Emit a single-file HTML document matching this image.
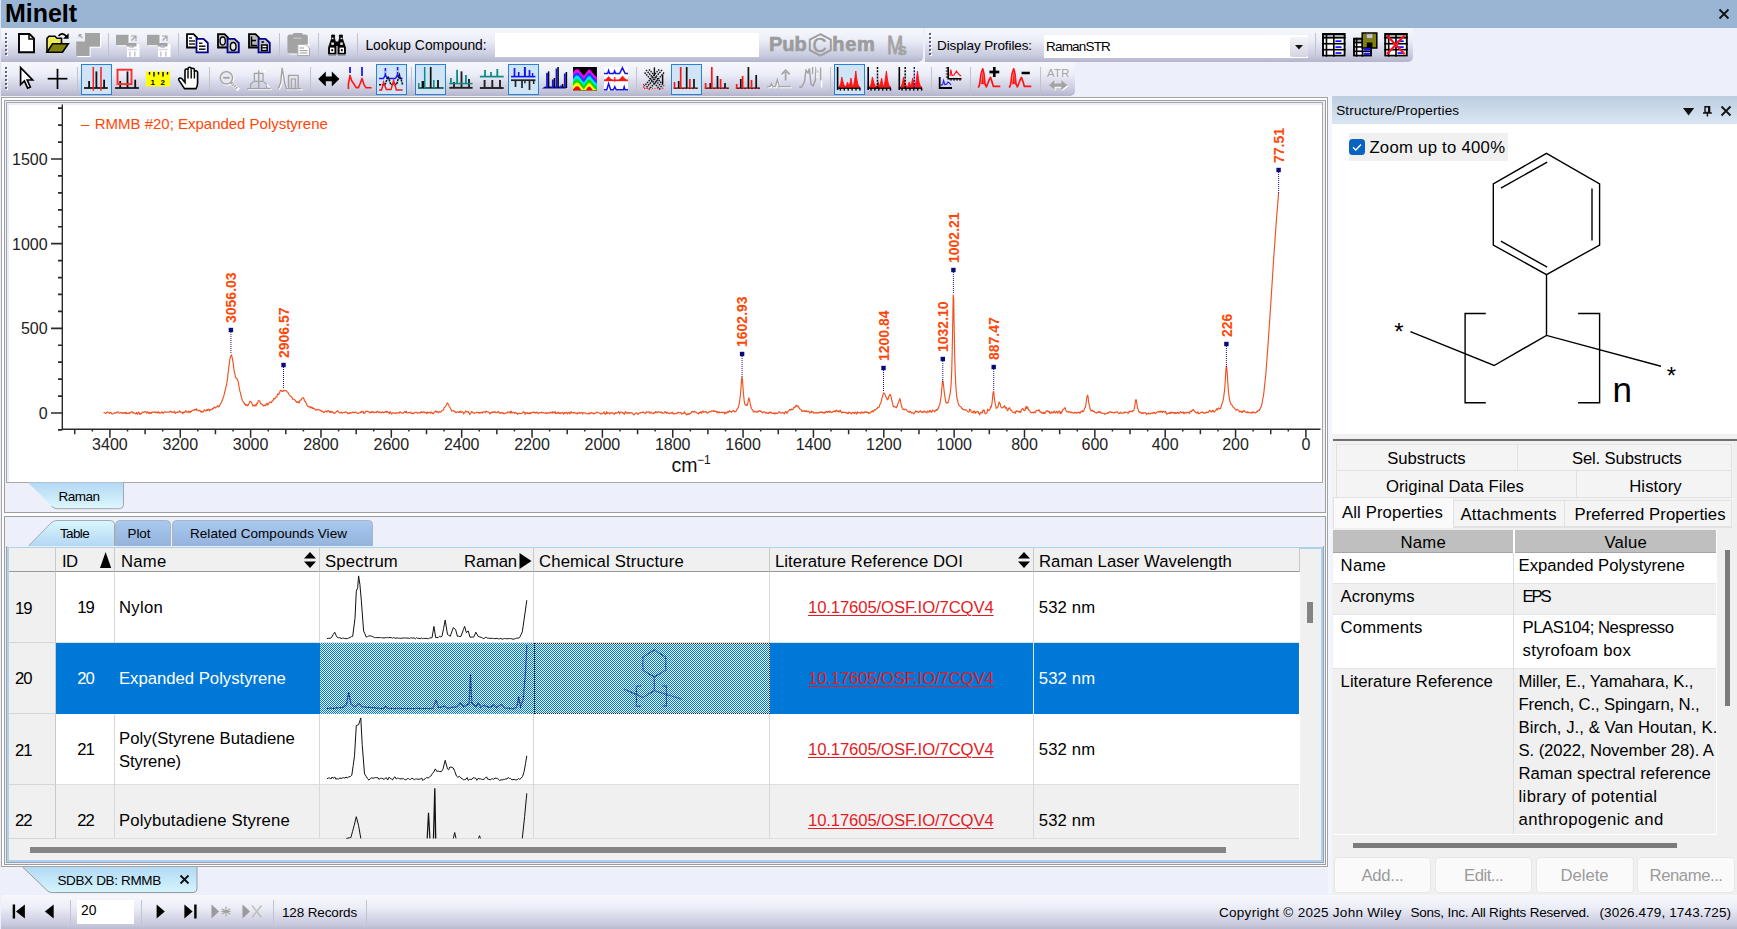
<!DOCTYPE html>
<html><head><meta charset="utf-8"><title>MineIt</title><style>
html,body{margin:0;padding:0;}
body{width:1737px;height:929px;overflow:hidden;background:#edf0fb;font-family:"Liberation Sans",sans-serif;color:#000;position:relative;}
.t{position:absolute;white-space:pre;line-height:1;}
svg{position:absolute;overflow:visible;}
.tb{position:absolute;background:linear-gradient(#f7f8fd 0%,#eceef8 35%,#c9cbdf 80%,#b4b5cc 100%);}
</style></head><body>
<div style="position:absolute;left:0px;top:0px;width:1737px;height:28px;background:#9ab4d4;"></div>
<div style="position:absolute;left:0px;top:0px;width:1px;height:97px;background:#dfe6f3;"></div>
<span class="t" style="left:5.00px;top:1px;font-size:25px;letter-spacing:-0.036px;font-weight:bold;">MineIt</span>
<svg style="left:1718px;top:8px" width="12" height="12"><path d="M1.5 1.5 L10.5 10.5 M10.5 1.5 L1.5 10.5" stroke="#111" stroke-width="1.8" fill="none"/></svg>
<div class="tb" style="position:absolute;left:1px;top:28px;width:921.5px;height:34px;border-radius:0 0 5px 0;"></div>
<div style="position:absolute;left:6px;top:34px;width:2px;height:2px;background:#fff;"></div>
<div style="position:absolute;left:5px;top:33px;width:2px;height:2px;background:#5f6179;"></div>
<div style="position:absolute;left:6px;top:38px;width:2px;height:2px;background:#fff;"></div>
<div style="position:absolute;left:5px;top:37px;width:2px;height:2px;background:#5f6179;"></div>
<div style="position:absolute;left:6px;top:42px;width:2px;height:2px;background:#fff;"></div>
<div style="position:absolute;left:5px;top:41px;width:2px;height:2px;background:#5f6179;"></div>
<div style="position:absolute;left:6px;top:46px;width:2px;height:2px;background:#fff;"></div>
<div style="position:absolute;left:5px;top:45px;width:2px;height:2px;background:#5f6179;"></div>
<div style="position:absolute;left:6px;top:50px;width:2px;height:2px;background:#fff;"></div>
<div style="position:absolute;left:5px;top:49px;width:2px;height:2px;background:#5f6179;"></div>
<div style="position:absolute;left:6px;top:54px;width:2px;height:2px;background:#fff;"></div>
<div style="position:absolute;left:5px;top:53px;width:2px;height:2px;background:#5f6179;"></div>
<div class="tb" style="position:absolute;left:925px;top:28px;width:488px;height:34px;border-radius:0 0 5px 0;"></div>
<div style="position:absolute;left:930px;top:34px;width:2px;height:2px;background:#fff;"></div>
<div style="position:absolute;left:929px;top:33px;width:2px;height:2px;background:#5f6179;"></div>
<div style="position:absolute;left:930px;top:38px;width:2px;height:2px;background:#fff;"></div>
<div style="position:absolute;left:929px;top:37px;width:2px;height:2px;background:#5f6179;"></div>
<div style="position:absolute;left:930px;top:42px;width:2px;height:2px;background:#fff;"></div>
<div style="position:absolute;left:929px;top:41px;width:2px;height:2px;background:#5f6179;"></div>
<div style="position:absolute;left:930px;top:46px;width:2px;height:2px;background:#fff;"></div>
<div style="position:absolute;left:929px;top:45px;width:2px;height:2px;background:#5f6179;"></div>
<div style="position:absolute;left:930px;top:50px;width:2px;height:2px;background:#fff;"></div>
<div style="position:absolute;left:929px;top:49px;width:2px;height:2px;background:#5f6179;"></div>
<div style="position:absolute;left:930px;top:54px;width:2px;height:2px;background:#fff;"></div>
<div style="position:absolute;left:929px;top:53px;width:2px;height:2px;background:#5f6179;"></div>
<div class="tb" style="position:absolute;left:1px;top:62px;width:1074px;height:34px;border-radius:0 0 5px 0;"></div>
<div style="position:absolute;left:6px;top:68px;width:2px;height:2px;background:#fff;"></div>
<div style="position:absolute;left:5px;top:67px;width:2px;height:2px;background:#5f6179;"></div>
<div style="position:absolute;left:6px;top:72px;width:2px;height:2px;background:#fff;"></div>
<div style="position:absolute;left:5px;top:71px;width:2px;height:2px;background:#5f6179;"></div>
<div style="position:absolute;left:6px;top:76px;width:2px;height:2px;background:#fff;"></div>
<div style="position:absolute;left:5px;top:75px;width:2px;height:2px;background:#5f6179;"></div>
<div style="position:absolute;left:6px;top:80px;width:2px;height:2px;background:#fff;"></div>
<div style="position:absolute;left:5px;top:79px;width:2px;height:2px;background:#5f6179;"></div>
<div style="position:absolute;left:6px;top:84px;width:2px;height:2px;background:#fff;"></div>
<div style="position:absolute;left:5px;top:83px;width:2px;height:2px;background:#5f6179;"></div>
<div style="position:absolute;left:6px;top:88px;width:2px;height:2px;background:#fff;"></div>
<div style="position:absolute;left:5px;top:87px;width:2px;height:2px;background:#5f6179;"></div>
<div style="position:absolute;left:108px;top:33px;width:1.4px;height:27px;background:#c2c2c8;"></div>
<div style="position:absolute;left:178px;top:33px;width:1.4px;height:27px;background:#c2c2c8;"></div>
<div style="position:absolute;left:279px;top:33px;width:1.4px;height:27px;background:#c2c2c8;"></div>
<div style="position:absolute;left:318px;top:33px;width:1.4px;height:27px;background:#c2c2c8;"></div>
<div style="position:absolute;left:356.5px;top:33px;width:1.4px;height:27px;background:#c2c2c8;"></div>
<div style="position:absolute;left:1315px;top:33px;width:1.4px;height:27px;background:#c2c2c8;"></div>
<div style="position:absolute;left:77px;top:67px;width:1.4px;height:27px;background:#c2c2c8;"></div>
<div style="position:absolute;left:209px;top:67px;width:1.4px;height:27px;background:#c2c2c8;"></div>
<div style="position:absolute;left:310px;top:67px;width:1.4px;height:27px;background:#c2c2c8;"></div>
<div style="position:absolute;left:411px;top:67px;width:1.4px;height:27px;background:#c2c2c8;"></div>
<div style="position:absolute;left:636px;top:67px;width:1.4px;height:27px;background:#c2c2c8;"></div>
<div style="position:absolute;left:830px;top:67px;width:1.4px;height:27px;background:#c2c2c8;"></div>
<div style="position:absolute;left:931px;top:67px;width:1.4px;height:27px;background:#c2c2c8;"></div>
<div style="position:absolute;left:970px;top:67px;width:1.4px;height:27px;background:#c2c2c8;"></div>
<div style="position:absolute;left:1040px;top:67px;width:1.4px;height:27px;background:#c2c2c8;"></div>
<span class="t" style="left:365.40px;top:39px;font-size:13.9px;letter-spacing:0.004px;">Lookup Compound:</span>
<div style="position:absolute;left:495px;top:33px;width:264px;height:24px;background:#fff;"></div>
<span class="t" style="left:937.00px;top:39px;font-size:13.5px;letter-spacing:-0.105px;">Display Profiles:</span>
<div style="position:absolute;left:1043.5px;top:35px;width:264.5px;height:23px;background:#fff;"></div>
<span class="t" style="left:1046.00px;top:40px;font-size:13.5px;letter-spacing:-0.815px;">RamanSTR</span>
<div style="position:absolute;left:1290px;top:37px;width:18px;height:20px;background:linear-gradient(#f4f4f8,#d4d5e2);border-radius:2px;"></div>
<svg style="left:1295px;top:45px" width="8" height="5"><path d="M0 0H8L4 4.5Z" fill="#111"/></svg>
<div style="position:absolute;left:81px;top:64px;width:29px;height:29px;background:#cfe4f7;border:1px solid #2a7fd6;"></div>
<div style="position:absolute;left:376px;top:64px;width:29px;height:29px;background:#cfe4f7;border:1px solid #2a7fd6;"></div>
<div style="position:absolute;left:415px;top:64px;width:29px;height:29px;background:#cfe4f7;border:1px solid #2a7fd6;"></div>
<div style="position:absolute;left:508px;top:64px;width:29px;height:29px;background:#cfe4f7;border:1px solid #2a7fd6;"></div>
<div style="position:absolute;left:671px;top:64px;width:29px;height:29px;background:#cfe4f7;border:1px solid #2a7fd6;"></div>
<div style="position:absolute;left:834px;top:64px;width:29px;height:29px;background:#cfe4f7;border:1px solid #2a7fd6;"></div>
<div style="position:absolute;left:1px;top:895px;width:1736px;height:34px;border-radius:4px 0 0 0;background:linear-gradient(#f7f8fd 0%,#eceef8 35%,#c9cbdf 85%,#b9bacf 100%);"></div>
<span class="t" style="left:282.00px;top:906px;font-size:13.5px;letter-spacing:-0.141px;">128 Records</span>
<span class="t" style="left:1219.00px;top:906px;font-size:13.5px;letter-spacing:0.284px;">Copyright © 2025 John Wiley</span>
<span class="t" style="left:1410.40px;top:906px;font-size:13.5px;letter-spacing:-0.204px;">Sons, Inc. All Rights Reserved.</span>
<span class="t" style="left:1599.50px;top:906px;font-size:13.5px;letter-spacing:0.129px;">(3026.479, 1743.725)</span>
<div style="position:absolute;left:77px;top:900px;width:57px;height:24px;background:#fff;"></div>
<span class="t" style="left:81.00px;top:904px;font-size:13.9px;letter-spacing:-0.081px;">20</span>
<div style="position:absolute;left:70px;top:900px;width:1.3px;height:25px;background:#c3c4d2;"></div>
<div style="position:absolute;left:141px;top:900px;width:1.3px;height:25px;background:#c3c4d2;"></div>
<div style="position:absolute;left:273px;top:900px;width:1.3px;height:25px;background:#c3c4d2;"></div>
<div style="position:absolute;left:366px;top:900px;width:1.3px;height:25px;background:#c3c4d2;"></div>
<svg style="left:11px;top:903px" width="22" height="18"><g fill="#000" stroke="none"><rect x="1.7" y="1.5" width="2.4" height="14"/><path d="M13.9 1.5V15.5L5 8.5Z"/></g></svg>
<svg style="left:41px;top:903px" width="22" height="18"><g fill="#000" stroke="none"><path d="M12.7 1.5V15.5L3.9 8.5Z"/></g></svg>
<svg style="left:151px;top:903px" width="22" height="18"><g fill="#000" stroke="none"><path d="M5.6 1.5V15.5L13.8 8.5Z"/></g></svg>
<svg style="left:181px;top:903px" width="22" height="18"><g fill="#000" stroke="none"><path d="M3.4 1.5V15.5L11.6 8.5Z"/><rect x="13.2" y="1.5" width="2.4" height="14"/></g></svg>
<svg style="left:210px;top:903px" width="22" height="18"><g fill="#9a9a9a" stroke="none"><path d="M1.5 1.5V15.5L9 8.5Z"/><path d="M16 3.5v10M11.8 6l8.4 5M20.2 6l-8.4 5M11.5 8.5h9" stroke="#a0a0a0" stroke-width="1.1" fill="none"/></g></svg>
<svg style="left:241px;top:903px" width="22" height="18"><g fill="#9a9a9a" stroke="none"><path d="M1.5 1.5V15.5L9 8.5Z"/><path d="M11 2.5l9.5 12M20.5 2.5l-9.5 12" stroke="#bdbdbd" stroke-width="1.4" fill="none"/></g></svg>
<svg style="left:0;top:865.5px" width="220" height="32"><defs><linearGradient id="gdb" x1="0" y1="0" x2="0" y2="1"><stop offset="0" stop-color="#b2d9f5"/><stop offset="1" stop-color="#d6f6fd"/></linearGradient></defs><path d="M22.6 1 H197 V23 Q197 26.5 193 26.5 H52 Q49 26.5 46.6 24 Z" fill="url(#gdb)" stroke="none"/><path d="M22.6 1 L46.6 24 Q49 26.5 52 26.5 H193 Q197 26.5 197 23 V1" fill="none" stroke="#9a9a9a" stroke-width="1"/></svg>
<span class="t" style="left:57.40px;top:874px;font-size:13.5px;letter-spacing:-0.347px;">SDBX DB: RMMB</span>
<svg style="left:178.5px;top:873.5px" width="12" height="12"><path d="M1.5 1.5 L9.5 9.5 M9.5 1.5 L1.5 9.5" stroke="#111" stroke-width="1.8" fill="none"/></svg>
<div style="position:absolute;left:1px;top:97px;width:1327px;height:770px;border:1px solid #a3a3a3;background:#fdfdfd;box-sizing:border-box;"></div>
<div style="position:absolute;left:4px;top:100px;width:1322px;height:413px;border:1px solid #9d9d9d;background:#edf0fb;box-sizing:border-box;"></div>
<div style="position:absolute;left:6px;top:102px;width:1317px;height:381px;border:1px solid #a8a8a8;background:#fff;box-sizing:border-box;"></div>
<div style="position:absolute;left:7px;top:103px;width:1315px;height:379px;border:2px solid #e9ecfb;border-right:none;border-bottom:none;box-sizing:border-box;"></div>
<svg style="left:0;top:0" width="1330" height="515" viewBox="0 0 1330 515"><g stroke="#2b2b2b" fill="none"><path d="M62.3 104.5V430 M61.6 429.3H1320.5" stroke-width="1.4"/><path d="M58 429.93H62.3 M51 413.00H62.3 M58 396.07H62.3 M58 379.13H62.3 M58 362.20H62.3 M58 345.26H62.3 M51 328.33H62.3 M58 311.40H62.3 M58 294.46H62.3 M58 277.53H62.3 M58 260.59H62.3 M51 243.66H62.3 M58 226.73H62.3 M58 209.79H62.3 M58 192.86H62.3 M58 175.92H62.3 M51 158.99H62.3 M58 142.06H62.3 M58 125.12H62.3 M58 108.19H62.3 " stroke-width="1.7"/><path d="M1305.90 429.3V437.8 M1288.31 429.3V431.5 M1270.72 429.3V434.3 M1253.14 429.3V431.5 M1235.55 429.3V437.8 M1217.96 429.3V431.5 M1200.37 429.3V434.3 M1182.78 429.3V431.5 M1165.20 429.3V437.8 M1147.61 429.3V431.5 M1130.02 429.3V434.3 M1112.43 429.3V431.5 M1094.84 429.3V437.8 M1077.26 429.3V431.5 M1059.67 429.3V434.3 M1042.08 429.3V431.5 M1024.49 429.3V437.8 M1006.90 429.3V431.5 M989.32 429.3V434.3 M971.73 429.3V431.5 M954.14 429.3V437.8 M936.55 429.3V431.5 M918.96 429.3V434.3 M901.38 429.3V431.5 M883.79 429.3V437.8 M866.20 429.3V431.5 M848.61 429.3V434.3 M831.02 429.3V431.5 M813.44 429.3V437.8 M795.85 429.3V431.5 M778.26 429.3V434.3 M760.67 429.3V431.5 M743.08 429.3V437.8 M725.50 429.3V431.5 M707.91 429.3V434.3 M690.32 429.3V431.5 M672.73 429.3V437.8 M655.14 429.3V431.5 M637.56 429.3V434.3 M619.97 429.3V431.5 M602.38 429.3V437.8 M584.79 429.3V431.5 M567.20 429.3V434.3 M549.62 429.3V431.5 M532.03 429.3V437.8 M514.44 429.3V431.5 M496.85 429.3V434.3 M479.26 429.3V431.5 M461.68 429.3V437.8 M444.09 429.3V431.5 M426.50 429.3V434.3 M408.91 429.3V431.5 M391.32 429.3V437.8 M373.74 429.3V431.5 M356.15 429.3V434.3 M338.56 429.3V431.5 M320.97 429.3V437.8 M303.38 429.3V431.5 M285.80 429.3V434.3 M268.21 429.3V431.5 M250.62 429.3V437.8 M233.03 429.3V431.5 M215.44 429.3V434.3 M197.86 429.3V431.5 M180.27 429.3V437.8 M162.68 429.3V431.5 M145.09 429.3V434.3 M127.50 429.3V431.5 M109.92 429.3V437.8 M92.33 429.3V431.5 M74.74 429.3V434.3 " stroke-width="1.5"/></g><path d="M103.6 413.0 L104.1 412.6 L104.6 412.8 L105.1 413.0 L105.6 413.4 L106.1 413.3 L106.6 412.5 L107.1 412.4 L107.6 412.0 L108.1 412.2 L108.6 412.3 L109.1 412.4 L109.6 413.5 L110.1 412.7 L110.6 412.5 L111.1 412.4 L111.6 413.5 L112.1 414.1 L112.6 414.0 L113.1 413.7 L113.6 413.2 L114.1 413.0 L114.6 412.6 L115.1 413.1 L115.6 412.8 L116.1 412.6 L116.6 413.0 L117.1 412.0 L117.6 412.0 L118.1 411.7 L118.6 412.5 L119.1 413.1 L119.6 413.1 L120.1 413.0 L120.6 412.6 L121.1 412.5 L121.6 412.9 L122.1 413.4 L122.6 413.4 L123.1 412.4 L123.6 413.0 L124.1 412.8 L124.6 412.5 L125.1 413.5 L125.6 413.1 L126.1 412.2 L126.6 413.6 L127.1 413.4 L127.6 413.2 L128.1 413.4 L128.6 412.9 L129.1 412.8 L129.6 413.6 L130.1 412.8 L130.6 412.4 L131.1 412.0 L131.6 411.6 L132.1 411.9 L132.6 412.2 L133.1 413.2 L133.6 412.6 L134.1 413.0 L134.6 413.1 L135.1 413.6 L135.6 413.8 L136.1 413.6 L136.6 412.5 L137.1 413.7 L137.6 414.1 L138.0 413.3 L138.5 412.3 L139.0 412.1 L139.5 413.4 L140.0 414.5 L140.5 413.5 L141.0 413.5 L141.5 413.8 L142.0 412.8 L142.5 412.1 L143.0 412.3 L143.5 412.3 L144.0 412.2 L144.5 411.6 L145.0 411.7 L145.5 411.9 L146.0 411.9 L146.5 413.1 L147.0 412.2 L147.5 411.9 L148.0 411.9 L148.5 413.3 L149.0 413.4 L149.5 412.6 L150.0 413.6 L150.5 413.3 L151.0 412.4 L151.5 413.2 L152.0 412.1 L152.5 412.0 L153.0 412.4 L153.5 412.3 L154.0 412.1 L154.5 412.3 L155.0 411.8 L155.5 412.5 L156.0 412.8 L156.5 412.1 L157.0 412.3 L157.5 412.9 L158.0 412.2 L158.5 411.6 L159.0 412.3 L159.5 413.2 L160.0 413.0 L160.5 412.9 L161.0 412.9 L161.5 412.0 L162.0 412.8 L162.5 412.0 L163.0 412.9 L163.5 413.2 L164.0 412.5 L164.5 411.9 L165.0 411.7 L165.5 411.9 L166.0 412.1 L166.5 412.2 L167.0 412.0 L167.5 412.3 L168.0 412.2 L168.5 412.0 L169.0 412.2 L169.5 411.9 L170.0 411.8 L170.5 411.0 L171.0 411.4 L171.5 412.1 L172.0 412.4 L172.5 412.4 L173.0 411.9 L173.5 412.3 L174.0 412.1 L174.5 411.2 L175.0 413.1 L175.5 413.4 L176.0 412.8 L176.5 412.3 L177.0 412.2 L177.5 412.4 L178.0 412.0 L178.5 411.9 L179.0 412.3 L179.5 410.9 L180.0 411.3 L180.5 412.0 L181.0 412.1 L181.5 412.2 L182.0 412.2 L182.5 413.6 L183.0 413.2 L183.5 412.1 L184.0 412.7 L184.5 412.4 L185.0 411.7 L185.5 411.3 L186.0 410.7 L186.5 412.1 L187.0 412.2 L187.5 412.1 L188.0 411.6 L188.5 411.0 L189.0 412.7 L189.5 411.5 L190.0 412.2 L190.5 411.3 L191.0 412.0 L191.5 411.4 L192.0 410.4 L192.5 410.5 L193.0 410.3 L193.5 409.9 L194.0 409.9 L194.5 410.1 L195.0 409.4 L195.5 409.3 L196.0 410.0 L196.5 408.8 L197.0 410.3 L197.5 410.1 L198.0 410.6 L198.5 410.7 L199.0 410.4 L199.5 410.6 L200.0 410.4 L200.5 411.5 L201.0 412.1 L201.5 411.3 L202.0 411.6 L202.5 411.9 L203.0 412.2 L203.5 410.9 L204.0 410.4 L204.5 409.8 L205.0 410.7 L205.5 410.7 L206.0 411.2 L206.5 410.5 L207.0 409.6 L207.5 410.4 L208.0 409.5 L208.5 409.2 L209.0 409.7 L209.5 410.9 L210.0 409.6 L210.5 409.7 L211.0 409.9 L211.5 409.5 L212.0 409.1 L212.5 408.3 L213.0 409.1 L213.5 408.3 L214.0 407.5 L214.5 407.0 L215.0 407.6 L215.5 408.0 L216.0 407.2 L216.5 407.1 L217.0 406.8 L217.5 405.8 L218.0 406.0 L218.5 407.0 L219.0 406.2 L219.5 406.4 L220.0 404.7 L220.5 403.7 L221.0 403.3 L221.5 402.3 L222.0 400.8 L222.5 399.9 L223.0 398.1 L223.5 397.1 L224.0 395.2 L224.5 393.0 L225.0 390.7 L225.5 389.5 L226.0 386.6 L226.5 385.0 L227.0 382.0 L227.5 379.1 L228.0 373.8 L228.5 370.3 L229.0 365.8 L229.5 361.9 L230.0 358.6 L230.5 356.7 L231.0 355.5 L231.5 354.9 L232.0 356.9 L232.5 359.4 L233.0 362.2 L233.5 365.9 L234.0 369.9 L234.5 372.8 L235.0 374.2 L235.5 377.0 L236.0 378.3 L236.5 378.4 L237.0 378.7 L237.5 379.8 L237.9 380.8 L238.4 382.7 L238.9 385.8 L239.4 388.9 L239.9 391.2 L240.4 392.6 L240.9 395.0 L241.4 397.1 L241.9 398.8 L242.4 400.5 L242.9 401.1 L243.4 402.3 L243.9 402.4 L244.4 404.2 L244.9 403.9 L245.4 404.4 L245.9 405.5 L246.4 404.6 L246.9 404.7 L247.4 405.8 L247.9 405.5 L248.4 404.4 L248.9 403.8 L249.4 402.4 L249.9 401.4 L250.4 401.3 L250.9 402.0 L251.4 402.5 L251.9 403.5 L252.4 404.3 L252.9 406.2 L253.4 405.7 L253.9 405.2 L254.4 405.7 L254.9 406.0 L255.4 404.7 L255.9 405.9 L256.4 405.0 L256.9 403.1 L257.4 403.4 L257.9 402.2 L258.4 400.6 L258.9 400.7 L259.4 400.8 L259.9 401.2 L260.4 402.9 L260.9 403.8 L261.4 404.2 L261.9 404.2 L262.4 404.8 L262.9 405.2 L263.4 405.9 L263.9 405.8 L264.4 405.1 L264.9 405.1 L265.4 405.5 L265.9 405.7 L266.4 403.7 L266.9 403.4 L267.4 403.4 L267.9 405.1 L268.4 404.1 L268.9 403.5 L269.4 402.3 L269.9 402.2 L270.4 402.3 L270.9 401.8 L271.4 402.7 L271.9 401.3 L272.4 400.8 L272.9 400.8 L273.4 399.4 L273.9 398.2 L274.4 399.0 L274.9 398.8 L275.4 397.9 L275.9 397.2 L276.4 396.8 L276.9 396.6 L277.4 394.6 L277.9 393.8 L278.4 394.3 L278.9 394.4 L279.4 392.5 L279.9 391.6 L280.4 390.5 L280.9 390.3 L281.4 390.9 L281.9 390.5 L282.4 391.6 L282.9 391.3 L283.4 390.8 L283.9 390.3 L284.4 390.7 L284.9 390.8 L285.4 390.6 L285.9 390.8 L286.4 390.9 L286.9 391.5 L287.4 392.3 L287.9 392.4 L288.4 393.2 L288.9 394.3 L289.4 395.1 L289.9 395.5 L290.4 396.0 L290.9 396.4 L291.4 397.0 L291.9 397.5 L292.4 398.1 L292.9 399.3 L293.4 399.2 L293.9 399.1 L294.4 399.5 L294.9 400.2 L295.4 400.3 L295.9 401.3 L296.4 402.4 L296.9 402.0 L297.4 402.3 L297.9 401.5 L298.4 402.0 L298.9 403.0 L299.4 402.5 L299.9 400.5 L300.4 400.1 L300.9 400.2 L301.4 399.6 L301.9 398.4 L302.4 397.8 L302.9 398.0 L303.4 397.8 L303.9 398.8 L304.4 400.3 L304.9 401.3 L305.4 401.6 L305.9 402.6 L306.4 403.4 L306.9 405.2 L307.4 405.9 L307.9 406.0 L308.4 406.8 L308.9 406.6 L309.4 406.9 L309.9 407.0 L310.4 407.8 L310.9 406.8 L311.4 407.1 L311.9 408.1 L312.4 408.5 L312.9 407.5 L313.4 408.6 L313.9 408.6 L314.4 408.6 L314.9 409.1 L315.4 410.1 L315.9 410.0 L316.4 409.9 L316.9 409.4 L317.4 409.4 L317.9 409.8 L318.4 409.6 L318.9 409.8 L319.4 410.0 L319.9 410.3 L320.4 410.6 L320.9 410.3 L321.4 411.1 L321.9 411.4 L322.4 411.2 L322.9 411.9 L323.4 411.8 L323.9 412.6 L324.4 412.3 L324.9 411.5 L325.4 411.1 L325.9 411.2 L326.4 411.4 L326.9 412.1 L327.4 410.8 L327.9 410.8 L328.4 410.5 L328.9 411.4 L329.4 411.6 L329.9 412.6 L330.4 411.7 L330.9 411.1 L331.4 412.4 L331.9 412.1 L332.4 411.6 L332.9 412.6 L333.4 413.2 L333.9 413.1 L334.4 412.9 L334.9 413.2 L335.4 412.5 L335.9 412.1 L336.4 411.6 L336.9 411.4 L337.3 410.8 L337.8 410.6 L338.3 411.9 L338.8 412.2 L339.3 412.7 L339.8 413.0 L340.3 412.6 L340.8 412.3 L341.3 411.9 L341.8 412.9 L342.3 413.2 L342.8 412.7 L343.3 412.5 L343.8 412.5 L344.3 412.4 L344.8 412.7 L345.3 412.1 L345.8 411.9 L346.3 412.1 L346.8 412.5 L347.3 412.5 L347.8 413.8 L348.3 413.6 L348.8 413.0 L349.3 413.5 L349.8 412.8 L350.3 412.5 L350.8 413.1 L351.3 412.9 L351.8 412.8 L352.3 412.3 L352.8 412.0 L353.3 412.1 L353.8 412.7 L354.3 412.6 L354.8 412.5 L355.3 412.0 L355.8 412.0 L356.3 412.6 L356.8 413.2 L357.3 413.1 L357.8 413.2 L358.3 413.4 L358.8 413.0 L359.3 413.0 L359.8 412.7 L360.3 412.3 L360.8 412.6 L361.3 411.2 L361.8 412.0 L362.3 411.6 L362.8 411.9 L363.3 411.5 L363.8 413.3 L364.3 413.3 L364.8 412.8 L365.3 412.3 L365.8 411.1 L366.3 411.6 L366.8 411.3 L367.3 411.4 L367.8 411.4 L368.3 411.6 L368.8 412.1 L369.3 412.0 L369.8 412.8 L370.3 412.1 L370.8 412.8 L371.3 412.6 L371.8 411.4 L372.3 412.0 L372.8 412.3 L373.3 411.8 L373.8 412.1 L374.3 412.8 L374.8 412.5 L375.3 412.2 L375.8 412.0 L376.3 412.7 L376.8 411.7 L377.3 411.2 L377.8 411.8 L378.3 412.0 L378.8 412.5 L379.3 411.8 L379.8 412.5 L380.3 412.2 L380.8 412.7 L381.3 413.0 L381.8 412.4 L382.3 411.8 L382.8 412.2 L383.3 412.8 L383.8 412.3 L384.3 412.5 L384.8 412.4 L385.3 411.7 L385.8 411.5 L386.3 412.3 L386.8 411.2 L387.3 411.8 L387.8 411.8 L388.3 412.5 L388.8 412.6 L389.3 413.6 L389.8 412.2 L390.3 411.7 L390.8 412.8 L391.3 413.6 L391.8 414.0 L392.3 412.8 L392.8 413.0 L393.3 412.9 L393.8 413.0 L394.3 412.9 L394.8 413.4 L395.3 413.1 L395.8 413.7 L396.3 413.3 L396.8 412.8 L397.3 412.5 L397.8 412.7 L398.3 413.2 L398.8 412.9 L399.3 413.1 L399.8 412.0 L400.3 411.9 L400.8 412.3 L401.3 412.8 L401.8 413.1 L402.3 413.4 L402.8 413.3 L403.3 412.9 L403.8 412.5 L404.3 412.3 L404.8 411.3 L405.3 412.3 L405.8 412.5 L406.3 411.1 L406.8 412.8 L407.3 413.1 L407.8 412.8 L408.3 412.7 L408.8 412.5 L409.3 412.7 L409.8 412.5 L410.3 412.6 L410.8 412.2 L411.3 413.5 L411.8 413.6 L412.3 413.2 L412.8 413.6 L413.3 413.7 L413.8 412.9 L414.3 413.2 L414.8 412.6 L415.3 412.2 L415.8 412.3 L416.3 412.2 L416.8 412.5 L417.3 413.3 L417.8 413.1 L418.3 412.7 L418.8 413.0 L419.3 412.9 L419.8 412.4 L420.3 413.0 L420.8 412.5 L421.3 411.6 L421.8 412.4 L422.3 412.4 L422.8 412.6 L423.3 411.8 L423.8 412.0 L424.3 411.8 L424.8 412.6 L425.3 412.6 L425.8 412.6 L426.3 413.6 L426.8 412.4 L427.3 412.0 L427.8 413.2 L428.3 412.5 L428.8 412.6 L429.3 412.3 L429.8 412.2 L430.3 413.2 L430.8 413.0 L431.3 411.9 L431.8 412.5 L432.3 413.0 L432.8 413.5 L433.3 413.7 L433.8 412.9 L434.3 411.7 L434.8 411.7 L435.3 411.8 L435.8 410.8 L436.3 411.7 L436.8 412.2 L437.2 411.8 L437.7 411.6 L438.2 412.2 L438.7 412.6 L439.2 412.0 L439.7 411.6 L440.2 412.2 L440.7 411.8 L441.2 411.6 L441.7 410.9 L442.2 410.6 L442.7 410.3 L443.2 410.0 L443.7 408.8 L444.2 407.6 L444.7 407.5 L445.2 406.4 L445.7 406.2 L446.2 405.3 L446.7 404.1 L447.2 402.9 L447.7 403.5 L448.2 404.0 L448.7 404.7 L449.2 406.5 L449.7 407.1 L450.2 408.1 L450.7 408.4 L451.2 409.7 L451.7 411.0 L452.2 410.8 L452.7 410.7 L453.2 411.2 L453.7 410.7 L454.2 411.2 L454.7 411.7 L455.2 411.5 L455.7 412.5 L456.2 412.6 L456.7 412.4 L457.2 411.8 L457.7 412.0 L458.2 412.0 L458.7 412.5 L459.2 412.2 L459.7 411.4 L460.2 412.2 L460.7 411.0 L461.2 412.0 L461.7 412.2 L462.2 412.2 L462.7 411.8 L463.2 412.8 L463.7 413.9 L464.2 413.0 L464.7 412.4 L465.2 412.1 L465.7 410.9 L466.2 411.6 L466.7 411.9 L467.2 411.7 L467.7 412.0 L468.2 411.4 L468.7 412.6 L469.2 412.9 L469.7 414.7 L470.2 413.4 L470.7 413.3 L471.2 412.5 L471.7 411.4 L472.2 412.0 L472.7 412.5 L473.2 412.9 L473.7 413.3 L474.2 413.4 L474.7 412.7 L475.2 412.7 L475.7 412.7 L476.2 412.8 L476.7 412.3 L477.2 412.2 L477.7 412.5 L478.2 412.3 L478.7 412.6 L479.2 413.3 L479.7 412.2 L480.2 412.2 L480.7 413.0 L481.2 412.2 L481.7 412.2 L482.2 413.3 L482.7 412.1 L483.2 412.1 L483.7 411.7 L484.2 411.8 L484.7 412.0 L485.2 412.6 L485.7 411.4 L486.2 411.3 L486.7 411.6 L487.2 411.6 L487.7 412.0 L488.2 411.9 L488.7 412.4 L489.2 412.6 L489.7 413.8 L490.2 413.6 L490.7 412.8 L491.2 412.1 L491.7 412.6 L492.2 412.8 L492.7 411.9 L493.2 412.5 L493.7 412.2 L494.2 411.6 L494.7 412.1 L495.2 411.8 L495.7 412.6 L496.2 412.6 L496.7 412.8 L497.2 412.7 L497.7 412.2 L498.2 411.2 L498.7 412.3 L499.2 412.9 L499.7 412.6 L500.2 413.3 L500.7 412.8 L501.2 412.5 L501.7 412.8 L502.2 412.6 L502.7 413.6 L503.2 412.8 L503.7 413.7 L504.2 413.7 L504.7 413.6 L505.2 413.5 L505.7 412.8 L506.2 412.8 L506.7 413.0 L507.2 412.7 L507.7 411.9 L508.2 412.3 L508.7 412.4 L509.2 411.9 L509.7 412.2 L510.2 413.2 L510.7 411.7 L511.2 411.0 L511.7 413.0 L512.2 412.9 L512.7 412.7 L513.2 412.3 L513.7 412.2 L514.2 412.6 L514.7 413.3 L515.2 413.1 L515.7 412.4 L516.2 413.2 L516.7 413.7 L517.2 413.3 L517.7 414.2 L518.2 413.8 L518.7 413.6 L519.2 413.0 L519.7 413.4 L520.2 413.6 L520.7 413.5 L521.2 413.3 L521.7 413.5 L522.2 413.2 L522.7 412.7 L523.2 412.1 L523.7 411.5 L524.2 412.6 L524.7 413.0 L525.2 414.3 L525.7 412.6 L526.2 413.2 L526.7 413.1 L527.2 412.7 L527.7 413.5 L528.2 413.0 L528.7 413.0 L529.2 414.0 L529.7 413.3 L530.2 412.5 L530.7 413.7 L531.2 412.9 L531.7 412.8 L532.2 412.6 L532.7 412.5 L533.2 412.0 L533.7 412.5 L534.2 412.2 L534.7 412.8 L535.2 412.4 L535.7 413.1 L536.2 413.1 L536.7 412.1 L537.1 412.2 L537.6 412.6 L538.1 413.4 L538.6 413.6 L539.1 413.2 L539.6 412.6 L540.1 412.5 L540.6 412.4 L541.1 412.7 L541.6 412.0 L542.1 412.6 L542.6 413.1 L543.1 412.5 L543.6 412.7 L544.1 412.9 L544.6 413.2 L545.1 413.2 L545.6 412.8 L546.1 412.6 L546.6 413.4 L547.1 413.0 L547.6 412.8 L548.1 413.4 L548.6 412.8 L549.1 413.0 L549.6 413.1 L550.1 412.6 L550.6 412.0 L551.1 412.8 L551.6 412.6 L552.1 413.2 L552.6 411.8 L553.1 412.6 L553.6 412.1 L554.1 412.8 L554.6 412.4 L555.1 411.4 L555.6 413.5 L556.1 413.5 L556.6 413.0 L557.1 413.0 L557.6 413.3 L558.1 412.0 L558.6 412.4 L559.1 413.5 L559.6 412.8 L560.1 413.8 L560.6 412.8 L561.1 413.2 L561.6 413.0 L562.1 412.3 L562.6 412.5 L563.1 413.5 L563.6 414.2 L564.1 413.0 L564.6 412.5 L565.1 413.2 L565.6 412.6 L566.1 412.5 L566.6 412.3 L567.1 413.8 L567.6 413.6 L568.1 412.8 L568.6 412.5 L569.1 412.2 L569.6 413.9 L570.1 413.4 L570.6 412.9 L571.1 411.5 L571.6 412.7 L572.1 413.0 L572.6 412.9 L573.1 412.4 L573.6 412.9 L574.1 412.3 L574.6 413.0 L575.1 412.8 L575.6 413.2 L576.1 413.0 L576.6 413.3 L577.1 414.0 L577.6 412.9 L578.1 412.8 L578.6 413.2 L579.1 412.9 L579.6 412.4 L580.1 413.2 L580.6 413.1 L581.1 412.7 L581.6 412.5 L582.1 412.9 L582.6 414.1 L583.1 412.9 L583.6 412.7 L584.1 412.8 L584.6 413.0 L585.1 412.8 L585.6 413.1 L586.1 413.6 L586.6 413.7 L587.1 413.7 L587.6 413.7 L588.1 414.0 L588.6 413.2 L589.1 413.8 L589.6 413.0 L590.1 413.6 L590.6 413.1 L591.1 412.3 L591.6 412.5 L592.1 413.1 L592.6 413.0 L593.1 412.9 L593.6 413.9 L594.1 413.8 L594.6 413.3 L595.1 413.4 L595.6 413.1 L596.1 412.6 L596.6 412.4 L597.1 412.1 L597.6 412.2 L598.1 412.7 L598.6 412.8 L599.1 413.0 L599.6 413.1 L600.1 413.2 L600.6 414.0 L601.1 413.7 L601.6 413.4 L602.1 413.7 L602.6 413.4 L603.1 412.9 L603.6 413.0 L604.1 411.8 L604.6 413.8 L605.1 413.5 L605.6 414.3 L606.1 413.1 L606.6 411.6 L607.1 413.6 L607.6 413.2 L608.1 412.8 L608.6 413.0 L609.1 412.7 L609.6 414.0 L610.1 413.1 L610.6 412.8 L611.1 412.9 L611.6 413.2 L612.1 412.7 L612.6 413.1 L613.1 412.9 L613.6 413.2 L614.1 414.3 L614.6 413.7 L615.1 413.3 L615.6 412.7 L616.1 413.3 L616.6 413.1 L617.1 412.7 L617.6 412.7 L618.1 412.1 L618.6 411.4 L619.1 412.6 L619.6 413.8 L620.1 412.9 L620.6 412.1 L621.1 412.0 L621.6 412.0 L622.1 412.7 L622.6 413.2 L623.1 412.6 L623.6 413.3 L624.1 414.1 L624.6 414.1 L625.1 412.2 L625.6 411.5 L626.1 412.5 L626.6 413.1 L627.1 412.9 L627.6 413.3 L628.1 412.4 L628.6 412.7 L629.1 413.4 L629.6 412.5 L630.1 413.0 L630.6 412.8 L631.1 412.9 L631.6 413.1 L632.1 412.8 L632.6 413.3 L633.1 414.1 L633.6 414.8 L634.1 414.7 L634.6 414.3 L635.1 413.7 L635.6 413.3 L636.1 412.8 L636.5 412.8 L637.0 413.3 L637.5 413.5 L638.0 414.4 L638.5 413.8 L639.0 413.2 L639.5 412.8 L640.0 412.9 L640.5 413.0 L641.0 412.5 L641.5 412.7 L642.0 412.4 L642.5 412.3 L643.0 412.5 L643.5 412.0 L644.0 412.7 L644.5 413.0 L645.0 413.4 L645.5 413.6 L646.0 412.5 L646.5 411.7 L647.0 412.2 L647.5 412.2 L648.0 411.9 L648.5 411.9 L649.0 411.7 L649.5 413.0 L650.0 413.3 L650.5 412.9 L651.0 412.1 L651.5 412.4 L652.0 413.1 L652.5 413.2 L653.0 413.5 L653.5 413.7 L654.0 412.5 L654.5 413.0 L655.0 413.0 L655.5 411.8 L656.0 411.6 L656.5 412.0 L657.0 412.8 L657.5 412.6 L658.0 411.9 L658.5 412.0 L659.0 411.7 L659.5 412.2 L660.0 412.2 L660.5 412.7 L661.0 412.5 L661.5 412.0 L662.0 413.2 L662.5 413.1 L663.0 412.9 L663.5 413.2 L664.0 413.2 L664.5 412.7 L665.0 411.7 L665.5 411.9 L666.0 412.2 L666.5 413.4 L667.0 412.1 L667.5 412.4 L668.0 412.7 L668.5 413.4 L669.0 413.2 L669.5 413.7 L670.0 413.3 L670.5 412.9 L671.0 412.9 L671.5 412.7 L672.0 413.3 L672.5 412.3 L673.0 412.9 L673.5 413.9 L674.0 413.6 L674.5 413.7 L675.0 413.9 L675.5 413.6 L676.0 413.1 L676.5 413.7 L677.0 413.4 L677.5 412.4 L678.0 412.2 L678.5 412.6 L679.0 412.7 L679.5 412.8 L680.0 412.9 L680.5 412.5 L681.0 412.7 L681.5 414.1 L682.0 413.6 L682.5 413.7 L683.0 413.0 L683.5 413.3 L684.0 413.0 L684.5 411.7 L685.0 412.8 L685.5 413.5 L686.0 414.0 L686.5 414.8 L687.0 414.9 L687.5 413.8 L688.0 413.7 L688.5 414.3 L689.0 414.5 L689.5 413.4 L690.0 413.6 L690.5 413.4 L691.0 413.0 L691.5 412.1 L692.0 411.4 L692.5 411.4 L693.0 412.0 L693.5 412.2 L694.0 411.5 L694.5 411.3 L695.0 412.1 L695.5 412.1 L696.0 412.2 L696.5 412.4 L697.0 412.8 L697.5 413.5 L698.0 413.4 L698.5 413.9 L699.0 412.7 L699.5 412.4 L700.0 413.1 L700.5 412.1 L701.0 411.8 L701.5 413.2 L702.0 411.9 L702.5 411.7 L703.0 410.9 L703.5 412.2 L704.0 412.0 L704.5 411.9 L705.0 411.9 L705.5 411.9 L706.0 411.4 L706.5 412.5 L707.0 412.9 L707.5 413.2 L708.0 412.8 L708.5 412.6 L709.0 411.9 L709.5 411.5 L710.0 411.4 L710.5 411.7 L711.0 411.8 L711.5 411.0 L712.0 410.8 L712.5 411.0 L713.0 411.4 L713.5 410.6 L714.0 411.4 L714.5 411.2 L715.0 410.9 L715.5 411.5 L716.0 411.3 L716.5 412.3 L717.0 411.6 L717.5 411.8 L718.0 412.9 L718.5 412.2 L719.0 412.7 L719.5 411.9 L720.0 412.4 L720.5 412.5 L721.0 412.3 L721.5 412.5 L722.0 412.3 L722.5 412.7 L723.0 412.2 L723.5 412.3 L724.0 412.2 L724.5 413.8 L725.0 412.5 L725.5 412.4 L726.0 413.4 L726.5 412.9 L727.0 412.4 L727.5 411.7 L728.0 412.6 L728.5 411.6 L729.0 411.9 L729.5 410.7 L730.0 411.4 L730.5 411.3 L731.0 411.8 L731.5 412.5 L732.0 411.6 L732.5 411.1 L733.0 410.5 L733.5 410.4 L734.0 411.1 L734.5 412.0 L735.0 411.8 L735.5 411.6 L736.0 411.4 L736.4 410.3 L736.9 409.5 L737.4 409.0 L737.9 408.0 L738.4 407.0 L738.9 405.2 L739.4 402.6 L739.9 399.0 L740.4 395.0 L740.9 389.5 L741.4 381.3 L741.9 377.2 L742.4 378.8 L742.9 386.5 L743.4 393.1 L743.9 398.0 L744.4 402.2 L744.9 404.3 L745.4 405.0 L745.9 405.2 L746.4 404.8 L746.9 405.4 L747.4 405.2 L747.9 402.7 L748.4 399.5 L748.9 397.9 L749.4 399.7 L749.9 402.0 L750.4 404.5 L750.9 406.5 L751.4 408.5 L751.9 409.3 L752.4 409.6 L752.9 410.6 L753.4 412.0 L753.9 411.6 L754.4 411.4 L754.9 411.6 L755.4 411.3 L755.9 411.9 L756.4 412.1 L756.9 412.3 L757.4 411.9 L757.9 411.2 L758.4 411.8 L758.9 410.9 L759.4 410.7 L759.9 411.1 L760.4 411.3 L760.9 410.9 L761.4 411.7 L761.9 412.1 L762.4 412.9 L762.9 412.5 L763.4 411.8 L763.9 411.8 L764.4 411.9 L764.9 412.3 L765.4 412.3 L765.9 413.2 L766.4 412.4 L766.9 412.7 L767.4 413.3 L767.9 413.4 L768.4 413.5 L768.9 412.6 L769.4 412.0 L769.9 413.0 L770.4 412.3 L770.9 412.0 L771.4 412.6 L771.9 413.4 L772.4 413.4 L772.9 413.4 L773.4 412.9 L773.9 412.9 L774.4 413.9 L774.9 413.2 L775.4 413.7 L775.9 412.7 L776.4 413.3 L776.9 413.3 L777.4 413.4 L777.9 413.3 L778.4 412.2 L778.9 411.9 L779.4 411.8 L779.9 411.9 L780.4 413.0 L780.9 413.0 L781.4 413.0 L781.9 413.2 L782.4 412.5 L782.9 412.8 L783.4 412.9 L783.9 413.1 L784.4 413.8 L784.9 412.7 L785.4 411.6 L785.9 411.6 L786.4 412.2 L786.9 413.4 L787.4 412.5 L787.9 411.3 L788.4 411.1 L788.9 410.5 L789.4 409.8 L789.9 409.5 L790.4 410.1 L790.9 409.4 L791.4 409.0 L791.9 409.8 L792.4 409.4 L792.9 409.5 L793.4 408.5 L793.9 407.3 L794.4 407.3 L794.9 407.7 L795.4 406.1 L795.9 405.7 L796.4 405.1 L796.9 406.6 L797.4 406.4 L797.9 406.0 L798.4 406.1 L798.9 407.6 L799.4 408.4 L799.9 409.2 L800.4 409.2 L800.9 409.3 L801.4 410.0 L801.9 411.3 L802.4 410.9 L802.9 411.4 L803.4 411.1 L803.9 411.3 L804.4 410.6 L804.9 410.6 L805.4 411.5 L805.9 411.5 L806.4 410.8 L806.9 411.7 L807.4 411.7 L807.9 411.3 L808.4 411.1 L808.9 411.4 L809.4 412.5 L809.9 413.2 L810.4 412.7 L810.9 412.4 L811.4 411.0 L811.9 412.2 L812.4 411.7 L812.9 411.6 L813.4 413.0 L813.9 413.2 L814.4 412.8 L814.9 413.0 L815.4 412.9 L815.9 412.5 L816.4 413.0 L816.9 412.6 L817.4 412.9 L817.9 413.1 L818.4 412.6 L818.9 412.9 L819.4 412.6 L819.9 411.8 L820.4 412.1 L820.9 412.4 L821.4 412.1 L821.9 412.6 L822.4 412.0 L822.9 413.0 L823.4 412.5 L823.9 412.8 L824.4 413.2 L824.9 412.0 L825.4 412.7 L825.9 411.7 L826.4 411.8 L826.9 411.3 L827.4 412.4 L827.9 411.8 L828.4 411.4 L828.9 412.0 L829.4 412.3 L829.9 411.0 L830.4 411.6 L830.9 412.2 L831.4 412.6 L831.9 412.3 L832.4 412.1 L832.9 412.1 L833.4 411.1 L833.9 411.7 L834.4 411.5 L834.9 410.8 L835.4 411.7 L835.9 411.0 L836.3 410.0 L836.8 411.1 L837.3 411.4 L837.8 411.4 L838.3 411.8 L838.8 410.8 L839.3 411.7 L839.8 411.0 L840.3 410.3 L840.8 411.7 L841.3 411.9 L841.8 412.9 L842.3 412.1 L842.8 412.5 L843.3 412.5 L843.8 412.4 L844.3 412.0 L844.8 412.4 L845.3 412.4 L845.8 412.7 L846.3 412.5 L846.8 413.1 L847.3 412.8 L847.8 413.7 L848.3 413.4 L848.8 412.0 L849.3 412.2 L849.8 413.0 L850.3 412.7 L850.8 413.1 L851.3 413.8 L851.8 413.6 L852.3 412.7 L852.8 412.4 L853.3 412.5 L853.8 413.0 L854.3 413.4 L854.8 412.3 L855.3 412.2 L855.8 412.9 L856.3 413.9 L856.8 414.0 L857.3 411.9 L857.8 412.8 L858.3 412.7 L858.8 412.5 L859.3 412.5 L859.8 412.6 L860.3 413.3 L860.8 413.4 L861.3 412.0 L861.8 412.6 L862.3 412.0 L862.8 413.1 L863.3 412.9 L863.8 412.4 L864.3 411.8 L864.8 412.6 L865.3 412.0 L865.8 411.9 L866.3 412.4 L866.8 411.9 L867.3 412.4 L867.8 412.6 L868.3 412.3 L868.8 413.6 L869.3 412.8 L869.8 412.8 L870.3 413.1 L870.8 412.6 L871.3 411.6 L871.8 411.7 L872.3 410.7 L872.8 411.5 L873.3 411.9 L873.8 410.5 L874.3 410.2 L874.8 409.7 L875.3 410.2 L875.8 409.5 L876.3 409.2 L876.8 408.6 L877.3 408.4 L877.8 407.3 L878.3 407.4 L878.8 407.3 L879.3 407.0 L879.8 404.7 L880.3 403.9 L880.8 402.7 L881.3 401.1 L881.8 398.9 L882.3 397.2 L882.8 395.0 L883.3 393.6 L883.8 392.9 L884.3 393.4 L884.8 393.9 L885.3 395.3 L885.8 396.4 L886.3 397.4 L886.8 398.1 L887.3 399.8 L887.8 399.4 L888.3 398.6 L888.8 396.4 L889.3 395.6 L889.8 394.5 L890.3 394.5 L890.8 396.1 L891.3 397.7 L891.8 400.5 L892.3 402.1 L892.8 404.7 L893.3 406.7 L893.8 406.3 L894.3 406.7 L894.8 406.9 L895.3 407.2 L895.8 407.1 L896.3 407.7 L896.8 406.5 L897.3 406.0 L897.8 404.1 L898.3 402.4 L898.8 401.4 L899.3 399.9 L899.8 398.6 L900.3 400.2 L900.8 402.8 L901.3 404.8 L901.8 406.8 L902.3 408.3 L902.8 409.0 L903.3 409.5 L903.8 409.2 L904.3 409.9 L904.8 409.4 L905.3 409.2 L905.8 409.2 L906.3 409.7 L906.8 410.4 L907.3 410.9 L907.8 411.4 L908.3 412.0 L908.8 411.9 L909.3 412.3 L909.8 411.2 L910.3 411.3 L910.8 411.8 L911.3 413.0 L911.8 412.6 L912.3 412.6 L912.8 413.0 L913.3 413.2 L913.8 414.0 L914.3 412.8 L914.8 412.6 L915.3 411.0 L915.8 411.5 L916.3 411.9 L916.8 411.2 L917.3 411.6 L917.8 411.8 L918.3 412.2 L918.8 412.5 L919.3 411.5 L919.8 411.3 L920.3 410.7 L920.8 411.6 L921.3 411.8 L921.8 412.4 L922.3 411.8 L922.8 412.7 L923.3 412.1 L923.8 411.5 L924.3 411.0 L924.8 412.0 L925.3 411.4 L925.8 412.0 L926.3 412.4 L926.8 412.9 L927.3 411.8 L927.8 410.9 L928.3 411.6 L928.8 412.1 L929.3 412.1 L929.8 410.5 L930.3 410.4 L930.8 411.2 L931.3 412.3 L931.8 412.2 L932.3 411.1 L932.8 410.0 L933.3 410.6 L933.8 411.0 L934.3 411.1 L934.8 411.8 L935.3 410.6 L935.7 410.8 L936.2 409.6 L936.7 410.3 L937.2 410.2 L937.7 409.0 L938.2 408.5 L938.7 406.9 L939.2 405.7 L939.7 404.9 L940.2 402.1 L940.7 398.8 L941.2 396.0 L941.7 389.6 L942.2 384.2 L942.7 380.7 L943.2 382.8 L943.7 387.0 L944.2 391.8 L944.7 395.1 L945.2 398.9 L945.7 401.1 L946.2 403.0 L946.7 403.0 L947.2 402.5 L947.7 403.0 L948.2 402.2 L948.7 400.4 L949.2 397.9 L949.7 395.7 L950.2 393.1 L950.7 389.3 L951.2 382.5 L951.7 371.3 L952.2 352.4 L952.7 323.8 L953.2 294.8 L953.7 298.8 L954.2 329.9 L954.7 355.8 L955.2 372.7 L955.7 383.5 L956.2 390.8 L956.7 396.2 L957.2 399.5 L957.7 400.8 L958.2 403.0 L958.7 404.9 L959.2 405.5 L959.7 406.1 L960.2 406.5 L960.7 406.9 L961.2 407.0 L961.7 408.4 L962.2 408.3 L962.7 409.5 L963.2 409.3 L963.7 409.6 L964.2 409.8 L964.7 409.6 L965.2 410.1 L965.7 409.8 L966.2 409.8 L966.7 410.3 L967.2 411.0 L967.7 411.6 L968.2 412.1 L968.7 412.0 L969.2 411.8 L969.7 409.1 L970.2 409.7 L970.7 409.9 L971.2 411.5 L971.7 412.3 L972.2 412.3 L972.7 412.0 L973.2 412.9 L973.7 411.0 L974.2 411.9 L974.7 411.0 L975.2 413.5 L975.7 412.9 L976.2 412.3 L976.7 412.0 L977.2 411.5 L977.7 411.5 L978.2 411.6 L978.7 413.5 L979.2 413.5 L979.7 414.9 L980.2 413.1 L980.7 412.4 L981.2 412.4 L981.7 413.0 L982.2 413.1 L982.7 411.0 L983.2 409.9 L983.7 410.9 L984.2 410.2 L984.7 412.4 L985.2 413.8 L985.7 413.3 L986.2 413.3 L986.7 413.0 L987.2 412.1 L987.7 409.0 L988.2 410.5 L988.7 410.5 L989.2 410.1 L989.7 409.9 L990.2 408.5 L990.7 406.5 L991.2 407.1 L991.7 404.8 L992.2 401.7 L992.7 396.1 L993.2 391.8 L993.7 391.3 L994.2 396.9 L994.7 400.4 L995.2 403.4 L995.7 405.3 L996.2 408.3 L996.7 408.0 L997.2 407.7 L997.7 407.4 L998.2 406.0 L998.7 403.2 L999.2 402.0 L999.7 403.0 L1000.2 404.1 L1000.7 406.4 L1001.2 407.3 L1001.7 407.9 L1002.2 407.7 L1002.7 407.7 L1003.2 407.3 L1003.7 406.6 L1004.2 407.0 L1004.7 405.6 L1005.2 407.1 L1005.7 408.4 L1006.2 407.5 L1006.7 407.9 L1007.2 410.7 L1007.7 410.3 L1008.2 409.8 L1008.7 408.4 L1009.2 407.9 L1009.7 407.8 L1010.2 409.2 L1010.7 410.1 L1011.2 410.1 L1011.7 410.3 L1012.2 411.9 L1012.7 412.3 L1013.2 412.5 L1013.7 412.3 L1014.2 412.0 L1014.7 412.4 L1015.2 413.4 L1015.7 411.8 L1016.2 410.7 L1016.7 411.5 L1017.2 411.0 L1017.7 411.2 L1018.2 411.2 L1018.7 411.3 L1019.2 412.4 L1019.7 411.9 L1020.2 411.2 L1020.7 412.4 L1021.2 410.6 L1021.7 409.4 L1022.2 408.9 L1022.7 408.4 L1023.2 409.1 L1023.7 410.2 L1024.2 410.7 L1024.7 410.7 L1025.2 409.2 L1025.7 407.8 L1026.2 406.2 L1026.7 408.7 L1027.2 407.3 L1027.7 407.0 L1028.2 409.2 L1028.7 409.8 L1029.2 410.4 L1029.7 410.9 L1030.2 411.7 L1030.7 412.1 L1031.2 412.9 L1031.7 412.5 L1032.2 412.5 L1032.7 412.1 L1033.2 413.0 L1033.7 412.6 L1034.2 412.4 L1034.7 411.8 L1035.2 412.8 L1035.6 411.9 L1036.1 410.8 L1036.6 410.2 L1037.1 410.5 L1037.6 410.5 L1038.1 410.7 L1038.6 410.4 L1039.1 409.7 L1039.6 411.0 L1040.1 412.1 L1040.6 411.9 L1041.1 412.0 L1041.6 413.0 L1042.1 413.4 L1042.6 413.0 L1043.1 412.1 L1043.6 413.3 L1044.1 413.7 L1044.6 412.5 L1045.1 413.3 L1045.6 412.3 L1046.1 411.3 L1046.6 410.9 L1047.1 411.3 L1047.6 410.9 L1048.1 411.5 L1048.6 411.4 L1049.1 412.6 L1049.6 411.5 L1050.1 413.4 L1050.6 413.2 L1051.1 412.9 L1051.6 411.9 L1052.1 412.8 L1052.6 412.2 L1053.1 412.9 L1053.6 412.2 L1054.1 410.9 L1054.6 412.1 L1055.1 412.0 L1055.6 413.1 L1056.1 412.1 L1056.6 411.3 L1057.1 411.9 L1057.6 413.2 L1058.1 412.6 L1058.6 411.6 L1059.1 411.1 L1059.6 411.1 L1060.1 413.4 L1060.6 413.6 L1061.1 411.8 L1061.6 413.1 L1062.1 411.7 L1062.6 410.0 L1063.1 409.9 L1063.6 409.0 L1064.1 408.8 L1064.6 408.2 L1065.1 407.5 L1065.6 409.4 L1066.1 410.9 L1066.6 411.0 L1067.1 411.9 L1067.6 412.0 L1068.1 412.0 L1068.6 412.3 L1069.1 411.4 L1069.6 411.7 L1070.1 412.1 L1070.6 412.4 L1071.1 412.9 L1071.6 412.0 L1072.1 412.2 L1072.6 413.0 L1073.1 413.1 L1073.6 413.0 L1074.1 413.0 L1074.6 412.2 L1075.1 413.0 L1075.6 412.5 L1076.1 412.4 L1076.6 413.1 L1077.1 412.8 L1077.6 412.6 L1078.1 412.2 L1078.6 412.5 L1079.1 412.2 L1079.6 413.1 L1080.1 413.2 L1080.6 412.1 L1081.1 411.4 L1081.6 411.4 L1082.1 411.6 L1082.6 410.7 L1083.1 411.7 L1083.6 411.2 L1084.1 409.8 L1084.6 408.4 L1085.1 407.7 L1085.6 406.6 L1086.1 402.4 L1086.6 398.8 L1087.1 396.2 L1087.6 395.2 L1088.1 397.0 L1088.6 402.3 L1089.1 404.3 L1089.6 406.2 L1090.1 409.1 L1090.6 409.3 L1091.1 411.1 L1091.6 410.5 L1092.1 410.8 L1092.6 410.0 L1093.1 411.2 L1093.6 411.5 L1094.1 411.2 L1094.6 412.0 L1095.1 412.5 L1095.6 412.7 L1096.1 412.6 L1096.6 413.1 L1097.1 412.6 L1097.6 412.3 L1098.1 412.4 L1098.6 411.5 L1099.1 412.2 L1099.6 411.7 L1100.1 412.4 L1100.6 412.1 L1101.1 413.4 L1101.6 413.0 L1102.1 413.0 L1102.6 413.1 L1103.1 413.3 L1103.6 413.2 L1104.1 413.4 L1104.6 414.3 L1105.1 414.0 L1105.6 413.7 L1106.1 413.6 L1106.6 413.8 L1107.1 413.4 L1107.6 412.7 L1108.1 412.9 L1108.6 413.1 L1109.1 412.2 L1109.6 412.0 L1110.1 411.8 L1110.6 411.6 L1111.1 412.3 L1111.6 412.6 L1112.1 412.1 L1112.6 412.7 L1113.1 412.8 L1113.6 412.6 L1114.1 412.5 L1114.6 412.8 L1115.1 412.3 L1115.6 412.6 L1116.1 412.3 L1116.6 411.9 L1117.1 412.0 L1117.6 411.9 L1118.1 413.0 L1118.6 413.6 L1119.1 413.6 L1119.6 413.0 L1120.1 412.1 L1120.6 413.1 L1121.1 412.8 L1121.6 413.2 L1122.1 413.4 L1122.6 413.3 L1123.1 412.7 L1123.6 412.6 L1124.1 412.0 L1124.6 412.9 L1125.1 412.3 L1125.6 412.0 L1126.1 412.2 L1126.6 412.2 L1127.1 412.7 L1127.6 413.2 L1128.1 413.1 L1128.6 413.2 L1129.1 411.3 L1129.6 412.0 L1130.1 411.2 L1130.6 411.5 L1131.1 411.5 L1131.6 411.2 L1132.1 411.8 L1132.6 410.9 L1133.1 410.5 L1133.6 410.8 L1134.1 409.2 L1134.6 407.1 L1135.1 404.3 L1135.5 400.3 L1136.0 399.5 L1136.5 401.5 L1137.0 404.7 L1137.5 408.0 L1138.0 408.8 L1138.5 410.9 L1139.0 412.0 L1139.5 411.7 L1140.0 412.5 L1140.5 412.4 L1141.0 413.3 L1141.5 412.8 L1142.0 413.3 L1142.5 412.7 L1143.0 413.5 L1143.5 412.8 L1144.0 412.9 L1144.5 412.7 L1145.0 412.7 L1145.5 412.6 L1146.0 413.4 L1146.5 414.5 L1147.0 413.6 L1147.5 413.7 L1148.0 413.5 L1148.5 412.9 L1149.0 413.9 L1149.5 413.8 L1150.0 413.6 L1150.5 413.8 L1151.0 413.1 L1151.5 413.0 L1152.0 413.3 L1152.5 413.5 L1153.0 412.7 L1153.5 413.0 L1154.0 412.5 L1154.5 412.3 L1155.0 413.4 L1155.5 413.6 L1156.0 413.1 L1156.5 412.6 L1157.0 412.1 L1157.5 411.7 L1158.0 411.4 L1158.5 411.9 L1159.0 412.1 L1159.5 411.6 L1160.0 411.9 L1160.5 411.2 L1161.0 412.2 L1161.5 411.4 L1162.0 411.5 L1162.5 412.5 L1163.0 411.4 L1163.5 411.3 L1164.0 411.4 L1164.5 412.2 L1165.0 412.3 L1165.5 411.4 L1166.0 412.2 L1166.5 414.1 L1167.0 413.8 L1167.5 413.8 L1168.0 413.3 L1168.5 413.1 L1169.0 413.4 L1169.5 413.5 L1170.0 412.5 L1170.5 413.3 L1171.0 411.9 L1171.5 412.5 L1172.0 413.2 L1172.5 412.5 L1173.0 412.3 L1173.5 413.0 L1174.0 412.5 L1174.5 413.6 L1175.0 413.7 L1175.5 412.6 L1176.0 412.8 L1176.5 413.5 L1177.0 412.8 L1177.5 412.3 L1178.0 412.5 L1178.5 413.6 L1179.0 413.4 L1179.5 412.8 L1180.0 412.3 L1180.5 411.5 L1181.0 412.1 L1181.5 412.6 L1182.0 412.7 L1182.5 412.0 L1183.0 412.8 L1183.5 412.0 L1184.0 413.8 L1184.5 412.8 L1185.0 413.1 L1185.5 412.6 L1186.0 412.2 L1186.5 413.0 L1187.0 412.8 L1187.5 412.5 L1188.0 412.1 L1188.5 412.6 L1189.0 412.9 L1189.5 413.5 L1190.0 411.3 L1190.5 411.4 L1191.0 411.3 L1191.5 411.7 L1192.0 410.4 L1192.5 410.4 L1193.0 409.6 L1193.5 409.8 L1194.0 410.6 L1194.5 410.8 L1195.0 411.9 L1195.5 412.2 L1196.0 412.5 L1196.5 413.1 L1197.0 412.7 L1197.5 412.6 L1198.0 411.7 L1198.5 413.8 L1199.0 413.5 L1199.5 413.5 L1200.0 413.2 L1200.5 412.6 L1201.0 412.2 L1201.5 412.2 L1202.0 412.5 L1202.5 412.1 L1203.0 412.0 L1203.5 413.1 L1204.0 412.8 L1204.5 413.3 L1205.0 413.4 L1205.5 412.7 L1206.0 412.4 L1206.5 412.1 L1207.0 412.5 L1207.5 412.4 L1208.0 412.6 L1208.5 412.0 L1209.0 411.5 L1209.5 410.6 L1210.0 410.4 L1210.5 411.3 L1211.0 411.6 L1211.5 412.0 L1212.0 411.5 L1212.5 410.2 L1213.0 410.2 L1213.5 411.7 L1214.0 411.9 L1214.5 412.0 L1215.0 411.0 L1215.5 410.6 L1216.0 410.1 L1216.5 408.9 L1217.0 409.6 L1217.5 409.8 L1218.0 408.2 L1218.5 408.0 L1219.0 408.4 L1219.5 409.0 L1220.0 408.7 L1220.5 408.7 L1221.0 407.0 L1221.5 405.5 L1222.0 403.5 L1222.5 402.3 L1223.0 400.9 L1223.5 398.8 L1224.0 394.3 L1224.5 391.2 L1225.0 384.7 L1225.5 376.7 L1226.0 368.6 L1226.5 366.1 L1227.0 370.2 L1227.5 377.9 L1228.0 385.8 L1228.5 391.9 L1229.0 396.0 L1229.5 399.4 L1230.0 401.5 L1230.5 403.1 L1231.0 404.2 L1231.5 404.4 L1232.0 404.9 L1232.5 406.4 L1233.0 406.9 L1233.5 407.5 L1234.0 407.7 L1234.5 408.4 L1235.0 408.8 L1235.4 409.5 L1235.9 410.2 L1236.4 409.8 L1236.9 409.4 L1237.4 409.6 L1237.9 409.9 L1238.4 410.3 L1238.9 410.9 L1239.4 412.0 L1239.9 411.3 L1240.4 411.3 L1240.9 411.7 L1241.4 412.2 L1241.9 411.2 L1242.4 412.5 L1242.9 411.2 L1243.4 411.1 L1243.9 410.2 L1244.4 411.4 L1244.9 411.7 L1245.4 412.1 L1245.9 412.0 L1246.4 412.2 L1246.9 412.6 L1247.4 411.8 L1247.9 412.5 L1248.4 412.7 L1248.9 412.2 L1249.4 412.6 L1249.9 412.7 L1250.4 412.4 L1250.9 412.6 L1251.4 413.2 L1251.9 412.9 L1252.4 412.8 L1252.9 411.7 L1253.4 412.7 L1253.9 412.1 L1254.4 412.7 L1254.9 412.8 L1255.4 412.9 L1255.9 412.6 L1256.4 412.1 L1256.9 411.2 L1257.4 411.7 L1257.9 410.8 L1258.4 410.3 L1258.9 410.0 L1259.4 410.5 L1259.9 409.0 L1260.4 408.3 L1260.9 407.1 L1261.4 406.0 L1261.9 403.8 L1262.4 401.0 L1262.9 398.4 L1263.4 396.0 L1263.9 392.3 L1264.4 387.4 L1264.9 383.0 L1265.4 378.1 L1265.9 373.2 L1266.4 366.5 L1266.9 359.8 L1267.4 353.0 L1267.9 346.4 L1268.4 339.2 L1268.9 331.9 L1269.4 324.6 L1269.9 316.9 L1270.4 309.5 L1270.9 302.0 L1271.4 294.0 L1271.9 286.3 L1272.4 278.5 L1272.9 270.8 L1273.4 262.6 L1273.9 255.2 L1274.4 248.3 L1274.9 241.5 L1275.4 234.3 L1275.9 227.1 L1276.4 220.1 L1276.9 213.9 L1277.4 207.9 L1277.9 201.6 L1278.4 195.5 L1278.6 193.0" fill="none" stroke="#f2501f" stroke-width="1.15" stroke-linejoin="round"/><path d="M230.9 332V354" stroke="#1a1a8c" stroke-width="1" stroke-dasharray="1 1" fill="none"/><rect x="228.7" y="327.8" width="4.4" height="4.4" fill="#0a0a7a"/><text transform="translate(236.1 323) rotate(-90)" font-family="Liberation Sans, sans-serif" font-weight="bold" font-size="14" fill="#ff4708">3056.03</text><path d="M283.5 367V389" stroke="#1a1a8c" stroke-width="1" stroke-dasharray="1 1" fill="none"/><rect x="281.3" y="362.8" width="4.4" height="4.4" fill="#0a0a7a"/><text transform="translate(288.7 358) rotate(-90)" font-family="Liberation Sans, sans-serif" font-weight="bold" font-size="14" fill="#ff4708">2906.57</text><path d="M742.1 356V378" stroke="#1a1a8c" stroke-width="1" stroke-dasharray="1 1" fill="none"/><rect x="739.9" y="351.8" width="4.4" height="4.4" fill="#0a0a7a"/><text transform="translate(747.3 347) rotate(-90)" font-family="Liberation Sans, sans-serif" font-weight="bold" font-size="14" fill="#ff4708">1602.93</text><path d="M883.5 370V392" stroke="#1a1a8c" stroke-width="1" stroke-dasharray="1 1" fill="none"/><rect x="881.3" y="365.8" width="4.4" height="4.4" fill="#0a0a7a"/><text transform="translate(888.7 361) rotate(-90)" font-family="Liberation Sans, sans-serif" font-weight="bold" font-size="14" fill="#ff4708">1200.84</text><path d="M942.8 361V382" stroke="#1a1a8c" stroke-width="1" stroke-dasharray="1 1" fill="none"/><rect x="940.6" y="356.8" width="4.4" height="4.4" fill="#0a0a7a"/><text transform="translate(948.0 352) rotate(-90)" font-family="Liberation Sans, sans-serif" font-weight="bold" font-size="14" fill="#ff4708">1032.10</text><path d="M953.4 272V294" stroke="#1a1a8c" stroke-width="1" stroke-dasharray="1 1" fill="none"/><rect x="951.2" y="267.8" width="4.4" height="4.4" fill="#0a0a7a"/><text transform="translate(958.6 263) rotate(-90)" font-family="Liberation Sans, sans-serif" font-weight="bold" font-size="14" fill="#ff4708">1002.21</text><path d="M993.7 369V391" stroke="#1a1a8c" stroke-width="1" stroke-dasharray="1 1" fill="none"/><rect x="991.5" y="364.8" width="4.4" height="4.4" fill="#0a0a7a"/><text transform="translate(998.9 360) rotate(-90)" font-family="Liberation Sans, sans-serif" font-weight="bold" font-size="14" fill="#ff4708">887.47</text><path d="M1226.4 346V368" stroke="#1a1a8c" stroke-width="1" stroke-dasharray="1 1" fill="none"/><rect x="1224.2" y="341.8" width="4.4" height="4.4" fill="#0a0a7a"/><text transform="translate(1231.6 337) rotate(-90)" font-family="Liberation Sans, sans-serif" font-weight="bold" font-size="14" fill="#ff4708">226</text><path d="M1278.6 172V193" stroke="#1a1a8c" stroke-width="1" stroke-dasharray="1 1" fill="none"/><rect x="1276.4" y="167.8" width="4.4" height="4.4" fill="#0a0a7a"/><text transform="translate(1283.8 163) rotate(-90)" font-family="Liberation Sans, sans-serif" font-weight="bold" font-size="14" fill="#ff4708">77.51</text></svg>
<span class="t" style="left:38.70px;top:406px;font-size:16px;color:#222;">0</span>
<span class="t" style="left:20.90px;top:321px;font-size:16px;color:#222;">500</span>
<span class="t" style="left:12.01px;top:237px;font-size:16px;color:#222;">1000</span>
<span class="t" style="left:12.01px;top:152px;font-size:16px;color:#222;">1500</span>
<span class="t" style="left:1301.45px;top:437px;font-size:16px;color:#222;">0</span>
<span class="t" style="left:1222.20px;top:437px;font-size:16px;color:#222;">200</span>
<span class="t" style="left:1151.85px;top:437px;font-size:16px;color:#222;">400</span>
<span class="t" style="left:1081.50px;top:437px;font-size:16px;color:#222;">600</span>
<span class="t" style="left:1011.14px;top:437px;font-size:16px;color:#222;">800</span>
<span class="t" style="left:936.34px;top:437px;font-size:16px;color:#222;">1000</span>
<span class="t" style="left:865.99px;top:437px;font-size:16px;color:#222;">1200</span>
<span class="t" style="left:795.64px;top:437px;font-size:16px;color:#222;">1400</span>
<span class="t" style="left:725.29px;top:437px;font-size:16px;color:#222;">1600</span>
<span class="t" style="left:654.93px;top:437px;font-size:16px;color:#222;">1800</span>
<span class="t" style="left:584.58px;top:437px;font-size:16px;color:#222;">2000</span>
<span class="t" style="left:514.23px;top:437px;font-size:16px;color:#222;">2200</span>
<span class="t" style="left:443.88px;top:437px;font-size:16px;color:#222;">2400</span>
<span class="t" style="left:373.53px;top:437px;font-size:16px;color:#222;">2600</span>
<span class="t" style="left:303.17px;top:437px;font-size:16px;color:#222;">2800</span>
<span class="t" style="left:232.82px;top:437px;font-size:16px;color:#222;">3000</span>
<span class="t" style="left:162.47px;top:437px;font-size:16px;color:#222;">3200</span>
<span class="t" style="left:92.12px;top:437px;font-size:16px;color:#222;">3400</span>
<span class="t" style="left:671.50px;top:456px;font-size:19.5px;color:#111;">cm</span>
<span class="t" style="left:697.00px;top:454px;font-size:12px;color:#111;">−1</span>
<span class="t" style="left:81.00px;top:116px;font-size:15px;color:#ff4708;">–</span>
<span class="t" style="left:94.80px;top:116px;font-size:15px;letter-spacing:-0.015px;color:#ff4708;">RMMB #20; Expanded Polystyrene</span>
<svg style="left:0;top:480px" width="140" height="32"><defs><linearGradient id="gra" x1="0" y1="0" x2="0" y2="1"><stop offset="0" stop-color="#b3d8f5"/><stop offset="1" stop-color="#dcf7fd"/></linearGradient></defs><path d="M28 2.5 H123 V24.7 Q123 28.2 119.5 28.2 H57 Q54 28.2 51.5 25.7 Z" fill="url(#gra)"/><path d="M123.5 2.5 V24.7 Q123.5 28.7 119.5 28.7 H57 Q54 28.7 51.5 26.2" fill="none" stroke="#a6a6a6" stroke-width="1"/></svg>
<span class="t" style="left:58.50px;top:490px;font-size:13.5px;letter-spacing:-0.504px;">Raman</span>
<div style="position:absolute;left:1328px;top:96px;width:4px;height:798px;background:#f3f5fd;"></div>
<div style="position:absolute;left:1332px;top:96px;width:405px;height:798.5px;background:#f0f0f0;"></div>
<div style="position:absolute;left:1332px;top:96px;width:405px;height:28.6px;background:linear-gradient(#bccee1,#dbe7f3);"></div>
<span class="t" style="left:1336.20px;top:104px;font-size:13.5px;letter-spacing:0.147px;">Structure/Properties</span>
<svg style="left:1680px;top:104px" width="56" height="14"><path d="M3 4H14.2L8.6 11.6Z" fill="#111"/><path d="M25 2.8H29.6V8.5H25Z M23 9H31.8 M27.4 9V12.4" fill="none" stroke="#111" stroke-width="1.4"/><path d="M28.8 3V8.5" stroke="#111" stroke-width="1.6"/><path d="M41.5 2.5 L50.5 11.5 M50.5 2.5 L41.5 11.5" stroke="#111" stroke-width="1.8" fill="none"/></svg>
<div style="position:absolute;left:1332px;top:124px;width:405px;height:310px;background:#fff;"></div>
<div style="position:absolute;left:1332px;top:434px;width:405px;height:5px;background:#f1f1f1;"></div>
<div style="position:absolute;left:1333px;top:439px;width:404px;height:2px;background:#6f6f6f;"></div>
<div style="position:absolute;left:1349px;top:133px;width:159px;height:28px;background:#f0f0f0;"></div>
<div style="position:absolute;left:1349px;top:139px;width:16px;height:16px;background:#0a63c0;border-radius:3.5px;"></div>
<svg style="left:1349px;top:139px" width="16" height="16"><path d="M4 8.3 L6.8 11 L12 5.5" fill="none" stroke="#fff" stroke-width="1.3"/></svg>
<span class="t" style="left:1369.40px;top:140px;font-size:16.7px;letter-spacing:0.278px;">Zoom up to 400%</span>
<svg style="left:0;top:0" width="1737" height="440"><path d="M1546.5 153.4 L1599.6 183.9 L1599.6 245.0 L1546.5 274.7 L1493.3 245.0 L1493.3 183.9Z M1500.9 188.1L1547.2 162.1 M1592.0 188.4L1592.0 240.4 M1500.9 241.2L1547.2 267.2 M1546.5 274.7L1546.5 335.4 M1410.4 331.6 L1494.1 365.5 L1546.5 335.4 L1661.0 366.3 M1485.8 313.5 L1465.1 313.5 L1465.1 402.8 L1485.8 402.8 M1578.1 313.5 L1599.6 313.5 L1599.6 402.8 L1578.1 402.8" fill="none" stroke="#000" stroke-width="1.4" stroke-linejoin="miter"/></svg>
<span class="t" style="left:1612.50px;top:372px;font-size:35px;">n</span>
<span class="t" style="left:1394.30px;top:320px;font-size:24px;">*</span>
<span class="t" style="left:1666.80px;top:364px;font-size:24px;">*</span>
<div style="position:absolute;left:1333px;top:443px;width:400px;height:85px;background:#f3f3f3;"></div>
<div style="position:absolute;left:1336px;top:444px;width:182px;height:27px;border:1px solid #e2e2e2;box-sizing:border-box;background:#f4f4f4;"></div>
<div style="position:absolute;left:1518px;top:444px;width:214px;height:27px;border:1px solid #e2e2e2;border-left:none;box-sizing:border-box;background:#f4f4f4;"></div>
<div style="position:absolute;left:1336px;top:471px;width:241px;height:27px;border:1px solid #e2e2e2;border-top:none;box-sizing:border-box;background:#f4f4f4;"></div>
<div style="position:absolute;left:1577px;top:471px;width:155px;height:27px;border:1px solid #e2e2e2;border-top:none;border-left:none;box-sizing:border-box;background:#f4f4f4;"></div>
<div style="position:absolute;left:1453px;top:500px;width:112px;height:27px;border:1px solid #e2e2e2;box-sizing:border-box;background:#f4f4f4;"></div>
<div style="position:absolute;left:1565px;top:500px;width:167px;height:27px;border:1px solid #e2e2e2;border-left:none;box-sizing:border-box;background:#f4f4f4;"></div>
<div style="position:absolute;left:1333px;top:497px;width:121px;height:31px;border:1px solid #e2e2e2;border-bottom:none;box-sizing:border-box;background:#fafafa;"></div>
<div style="position:absolute;left:1453px;top:527px;width:280px;height:1px;background:#e2e2e2;"></div>
<span class="t" style="left:1387.20px;top:451px;font-size:16.7px;letter-spacing:-0.039px;">Substructs</span>
<span class="t" style="left:1572.00px;top:451px;font-size:16.7px;letter-spacing:-0.167px;">Sel. Substructs</span>
<span class="t" style="left:1386.00px;top:479px;font-size:16.7px;letter-spacing:0.034px;">Original Data Files</span>
<span class="t" style="left:1629.20px;top:479px;font-size:16.7px;letter-spacing:0.091px;">History</span>
<span class="t" style="left:1342.00px;top:505px;font-size:16.7px;letter-spacing:0.120px;">All Properties</span>
<span class="t" style="left:1460.40px;top:507px;font-size:16.7px;letter-spacing:0.343px;">Attachments</span>
<span class="t" style="left:1574.50px;top:507px;font-size:16.7px;letter-spacing:0.041px;">Preferred Properties</span>
<div style="position:absolute;left:1333px;top:530px;width:384px;height:304.6px;background:#fff;"></div>
<div style="position:absolute;left:1333px;top:530px;width:180px;height:22px;background:#bfbfbf;border-bottom:1px solid #a5a5a5;"></div>
<div style="position:absolute;left:1515px;top:530px;width:201px;height:22px;background:#bfbfbf;border-bottom:1px solid #a5a5a5;"></div>
<span class="t" style="left:1400.40px;top:535px;font-size:16.7px;letter-spacing:0.263px;">Name</span>
<span class="t" style="left:1604.50px;top:535px;font-size:16.7px;letter-spacing:0.205px;">Value</span>
<div style="position:absolute;left:1333px;top:553px;width:383px;height:31px;background:#fff;border-bottom:1px solid #e3e3e3;box-sizing:border-box;"></div>
<div style="position:absolute;left:1333px;top:584px;width:383px;height:31px;background:#f0f0f0;border-bottom:1px solid #e3e3e3;box-sizing:border-box;"></div>
<div style="position:absolute;left:1333px;top:615px;width:383px;height:54px;background:#fff;border-bottom:1px solid #e3e3e3;box-sizing:border-box;"></div>
<div style="position:absolute;left:1333px;top:669px;width:383px;height:164.5px;background:#f0f0f0;box-sizing:border-box;"></div>
<div style="position:absolute;left:1513px;top:553px;width:1px;height:281px;background:#dcdcdc;"></div>
<span class="t" style="left:1340.60px;top:558px;font-size:16.7px;letter-spacing:0.263px;">Name</span>
<span class="t" style="left:1518.60px;top:558px;font-size:16.7px;letter-spacing:-0.036px;">Expanded Polystyrene</span>
<span class="t" style="left:1340.60px;top:589px;font-size:16.7px;letter-spacing:-0.030px;">Acronyms</span>
<span class="t" style="left:1522.60px;top:589px;font-size:16.7px;letter-spacing:-2.139px;">EPS</span>
<span class="t" style="left:1340.60px;top:620px;font-size:16.7px;letter-spacing:0.158px;">Comments</span>
<span class="t" style="left:1522.60px;top:620px;font-size:16.7px;letter-spacing:-0.482px;">PLAS104; Nespresso</span>
<span class="t" style="left:1522.60px;top:643px;font-size:16.7px;letter-spacing:0.278px;">styrofoam box</span>
<span class="t" style="left:1340.60px;top:674px;font-size:16.7px;letter-spacing:0.008px;">Literature Reference</span>
<span class="t" style="left:1518.50px;top:674px;font-size:16.7px;letter-spacing:-0.141px;">Miller, E., Yamahara, K.,</span>
<span class="t" style="left:1518.50px;top:697px;font-size:16.7px;letter-spacing:-0.148px;">French, C., Spingarn, N.,</span>
<span class="t" style="left:1518.50px;top:720px;font-size:16.7px;letter-spacing:0.059px;">Birch, J., &amp; Van Houtan, K.</span>
<span class="t" style="left:1518.50px;top:743px;font-size:16.7px;letter-spacing:-0.089px;">S. (2022, November 28). A</span>
<span class="t" style="left:1518.50px;top:766px;font-size:16.7px;letter-spacing:0.015px;">Raman spectral reference</span>
<span class="t" style="left:1518.50px;top:789px;font-size:16.7px;letter-spacing:0.359px;">library of potential</span>
<span class="t" style="left:1518.50px;top:812px;font-size:16.7px;letter-spacing:0.408px;">anthropogenic and</span>
<div style="position:absolute;left:1717px;top:530px;width:20px;height:320px;background:#f0f0f0;"></div>
<div style="position:absolute;left:1724.5px;top:550px;width:5.5px;height:156px;background:#7b7b7b;"></div>
<div style="position:absolute;left:1353px;top:842.5px;width:324px;height:5.5px;background:#7b7b7b;"></div>
<div style="position:absolute;left:1334px;top:857px;width:97px;height:36px;background:#fafafa;border:1px solid #e7e7e7;border-radius:4px;box-sizing:border-box;"></div>
<span class="t" style="left:1361.40px;top:868px;font-size:16.7px;letter-spacing:-0.272px;color:#9b9b9b;">Add...</span>
<div style="position:absolute;left:1435px;top:857px;width:97px;height:36px;background:#fafafa;border:1px solid #e7e7e7;border-radius:4px;box-sizing:border-box;"></div>
<span class="t" style="left:1464.00px;top:868px;font-size:16.7px;letter-spacing:-0.485px;color:#9b9b9b;">Edit...</span>
<div style="position:absolute;left:1536px;top:857px;width:97.5px;height:36px;background:#fafafa;border:1px solid #e7e7e7;border-radius:4px;box-sizing:border-box;"></div>
<span class="t" style="left:1560.40px;top:868px;font-size:16.7px;letter-spacing:0.004px;color:#9b9b9b;">Delete</span>
<div style="position:absolute;left:1636.5px;top:857px;width:98px;height:36px;background:#fafafa;border:1px solid #e7e7e7;border-radius:4px;box-sizing:border-box;"></div>
<span class="t" style="left:1649.60px;top:868px;font-size:16.7px;letter-spacing:-0.449px;color:#9b9b9b;">Rename...</span>
<div style="position:absolute;left:4px;top:516px;width:1322px;height:349px;border:1px solid #9d9d9d;background:#edf0fb;box-sizing:border-box;"></div>
<svg style="left:0;top:516px" width="400" height="34"><defs>
<linearGradient id="gta" x1="0" y1="0" x2="0" y2="1"><stop offset="0" stop-color="#d8f7fd"/><stop offset="1" stop-color="#b3d6f5"/></linearGradient>
<linearGradient id="gti" x1="0" y1="0" x2="0" y2="1"><stop offset="0" stop-color="#a9caee"/><stop offset="0.5" stop-color="#9dbde6"/><stop offset="1" stop-color="#96b3da"/></linearGradient></defs>
<path d="M115.5 31 V9.5 Q115.5 4.5 120.5 4.5 H166.5 Q170.5 4.5 170.5 8.5 V31 Z" fill="url(#gti)" stroke="#a9b4c6" stroke-width="1"/>
<path d="M172.5 31 V8.5 Q172.5 4.5 176.5 4.5 H368.5 Q372.5 4.5 372.5 8.5 V31 Z" fill="url(#gti)" stroke="#a9b4c6" stroke-width="1"/>
<path d="M27.5 31 L51 7 Q53.5 4.5 57 4.5 H110.5 Q114.5 4.5 114.5 8.5 V31 Z" fill="url(#gta)" stroke="#a9a9a9" stroke-width="1"/>
</svg>
<span class="t" style="left:60.00px;top:527px;font-size:13.5px;letter-spacing:-0.655px;">Table</span>
<span class="t" style="left:127.50px;top:527px;font-size:13.5px;letter-spacing:-0.066px;">Plot</span>
<span class="t" style="left:190.00px;top:527px;font-size:13.5px;letter-spacing:0.052px;">Related Compounds View</span>
<div style="position:absolute;left:6px;top:546px;width:1318px;height:317px;border:1px solid #a2a2a2;border-top:none;background:#f0f0f0;box-sizing:border-box;"></div>
<div style="position:absolute;left:7px;top:547px;width:1316px;height:315px;border:2px solid #a9d1f1;background:#f0f0f0;box-sizing:border-box;"></div>
<div style="position:absolute;left:9px;top:549px;width:1291.4px;height:290.4px;background:#fff;"></div>
<div style="position:absolute;left:9px;top:548px;width:47px;height:24px;background:#f0f0f0;border-right:1px solid #c9c9c9;border-bottom:1px solid #999;box-sizing:border-box;"></div>
<div style="position:absolute;left:56px;top:548px;width:59px;height:24px;background:#f0f0f0;border-right:1px solid #c9c9c9;border-bottom:1px solid #999;box-sizing:border-box;"></div>
<div style="position:absolute;left:115px;top:548px;width:205px;height:24px;background:#f0f0f0;border-right:1px solid #c9c9c9;border-bottom:1px solid #999;box-sizing:border-box;"></div>
<div style="position:absolute;left:320px;top:548px;width:214px;height:24px;background:#f0f0f0;border-right:1px solid #c9c9c9;border-bottom:1px solid #999;box-sizing:border-box;"></div>
<div style="position:absolute;left:534px;top:548px;width:236px;height:24px;background:#f0f0f0;border-right:1px solid #c9c9c9;border-bottom:1px solid #999;box-sizing:border-box;"></div>
<div style="position:absolute;left:770px;top:548px;width:264px;height:24px;background:#f0f0f0;border-right:1px solid #c9c9c9;border-bottom:1px solid #999;box-sizing:border-box;"></div>
<div style="position:absolute;left:1034px;top:548px;width:266px;height:24px;background:#f0f0f0;border-right:1px solid #c9c9c9;border-bottom:1px solid #999;box-sizing:border-box;"></div>
<div style="position:absolute;left:1300.4px;top:549px;width:20.6px;height:291px;background:#f0f0f0;"></div>
<span class="t" style="left:62.10px;top:554px;font-size:16.7px;letter-spacing:-0.700px;">ID</span>
<span class="t" style="left:121.00px;top:554px;font-size:16.7px;letter-spacing:0.263px;">Name</span>
<span class="t" style="left:325.00px;top:554px;font-size:16.7px;letter-spacing:0.192px;">Spectrum</span>
<span class="t" style="left:464.00px;top:554px;font-size:16.7px;letter-spacing:-0.167px;">Raman</span>
<span class="t" style="left:539.00px;top:554px;font-size:16.7px;letter-spacing:0.166px;">Chemical Structure</span>
<span class="t" style="left:775.00px;top:554px;font-size:16.7px;letter-spacing:0.059px;">Literature Reference DOI</span>
<span class="t" style="left:1039.00px;top:554px;font-size:16.7px;letter-spacing:0.024px;">Raman Laser Wavelength</span>
<svg style="left:0;top:548px" width="1300" height="24"><g fill="#000"><path d="M100 20 L105.6 4 L111.2 20Z"/><path d="M304 10.5 L310 4 L316 10.5Z M304 13.5 L310 20 L316 13.5Z"/><path d="M519.5 5 V21 L531.5 13Z"/><path d="M1018 10.5 L1024 4 L1030 10.5Z M1018 13.5 L1024 20 L1030 13.5Z"/></g></svg>
<div style="position:absolute;left:9px;top:572px;width:47px;height:71px;background:#f0f0f0;border-right:1px solid #c9c9c9;border-bottom:1px solid #d6d6d6;box-sizing:border-box;"></div>
<span class="t" style="left:15.00px;top:601px;font-size:16.7px;letter-spacing:-1.038px;">19</span>
<div style="position:absolute;left:56px;top:572px;width:1243.4px;height:71px;background:#fff;border-bottom:1px solid #dedede;box-sizing:border-box;"></div>
<div style="position:absolute;left:114px;top:572px;width:1px;height:71px;background:#d9d9d9;"></div>
<div style="position:absolute;left:319px;top:572px;width:1px;height:71px;background:#d9d9d9;"></div>
<div style="position:absolute;left:533px;top:572px;width:1px;height:71px;background:#d9d9d9;"></div>
<div style="position:absolute;left:769px;top:572px;width:1px;height:71px;background:#d9d9d9;"></div>
<div style="position:absolute;left:1033px;top:572px;width:1px;height:71px;background:#d9d9d9;"></div>
<span class="t" style="left:77.15px;top:600px;font-size:16.7px;letter-spacing:-1.038px;color:#000;">19</span>
<span class="t" style="left:119.00px;top:600px;font-size:16.7px;letter-spacing:0.261px;color:#000;">Nylon</span>
<span class="t" style="left:808.00px;top:600px;font-size:16.7px;letter-spacing:-0.131px;color:#e51b24;text-decoration:underline;text-decoration-thickness:1px;text-underline-offset:2px;">10.17605/OSF.IO/7CQV4</span>
<span class="t" style="left:1038.80px;top:600px;font-size:16.7px;letter-spacing:0.116px;color:#000;">532 nm</span>
<div style="position:absolute;left:9px;top:643px;width:47px;height:71px;background:#f0f0f0;border-right:1px solid #c9c9c9;border-bottom:1px solid #d6d6d6;box-sizing:border-box;"></div>
<span class="t" style="left:15.00px;top:671px;font-size:16.7px;letter-spacing:-1.038px;">20</span>
<div style="position:absolute;left:56px;top:643px;width:1243.4px;height:71px;background:#0078d7;"></div>
<div style="position:absolute;left:320px;top:643px;width:214px;height:71px;background:repeating-conic-gradient(#0078d7 0% 25%,#eaf3fb 0% 50%) 0 0/2px 2px;"></div>
<div style="position:absolute;left:534px;top:643px;width:236px;height:71px;background:repeating-conic-gradient(#0078d7 0% 25%,#eaf3fb 0% 50%) 0 0/2px 2px;border:1px dotted #2b1a00;box-sizing:border-box;"></div>
<div style="position:absolute;left:1033px;top:643px;width:1px;height:71px;background:#d9e9f7;"></div>
<span class="t" style="left:77.15px;top:671px;font-size:16.7px;letter-spacing:-1.038px;color:#fff;">20</span>
<span class="t" style="left:119.00px;top:671px;font-size:16.7px;letter-spacing:-0.006px;color:#fff;">Expanded Polystyrene</span>
<span class="t" style="left:808.00px;top:671px;font-size:16.7px;letter-spacing:-0.131px;color:#e51b24;text-decoration:underline;text-decoration-thickness:1px;text-underline-offset:2px;">10.17605/OSF.IO/7CQV4</span>
<span class="t" style="left:1038.80px;top:671px;font-size:16.7px;letter-spacing:0.116px;color:#fff;">532 nm</span>
<div style="position:absolute;left:9px;top:714px;width:47px;height:71px;background:#f0f0f0;border-right:1px solid #c9c9c9;border-bottom:1px solid #d6d6d6;box-sizing:border-box;"></div>
<span class="t" style="left:15.00px;top:743px;font-size:16.7px;letter-spacing:-1.038px;">21</span>
<div style="position:absolute;left:56px;top:714px;width:1243.4px;height:71px;background:#fff;border-bottom:1px solid #dedede;box-sizing:border-box;"></div>
<div style="position:absolute;left:114px;top:714px;width:1px;height:71px;background:#d9d9d9;"></div>
<div style="position:absolute;left:319px;top:714px;width:1px;height:71px;background:#d9d9d9;"></div>
<div style="position:absolute;left:533px;top:714px;width:1px;height:71px;background:#d9d9d9;"></div>
<div style="position:absolute;left:769px;top:714px;width:1px;height:71px;background:#d9d9d9;"></div>
<div style="position:absolute;left:1033px;top:714px;width:1px;height:71px;background:#d9d9d9;"></div>
<span class="t" style="left:77.15px;top:742px;font-size:16.7px;letter-spacing:-1.038px;color:#000;">21</span>
<span class="t" style="left:808.00px;top:742px;font-size:16.7px;letter-spacing:-0.131px;color:#e51b24;text-decoration:underline;text-decoration-thickness:1px;text-underline-offset:2px;">10.17605/OSF.IO/7CQV4</span>
<span class="t" style="left:1038.80px;top:742px;font-size:16.7px;letter-spacing:0.116px;color:#000;">532 nm</span>
<div style="position:absolute;left:9px;top:785px;width:47px;height:54px;background:#f0f0f0;border-right:1px solid #c9c9c9;border-bottom:1px solid #d6d6d6;box-sizing:border-box;"></div>
<span class="t" style="left:15.00px;top:813px;font-size:16.7px;letter-spacing:-1.038px;">22</span>
<div style="position:absolute;left:56px;top:785px;width:1243.4px;height:54px;background:#f0f0f0;border-bottom:1px solid #dedede;box-sizing:border-box;"></div>
<div style="position:absolute;left:114px;top:785px;width:1px;height:54px;background:#d9d9d9;"></div>
<div style="position:absolute;left:319px;top:785px;width:1px;height:54px;background:#d9d9d9;"></div>
<div style="position:absolute;left:533px;top:785px;width:1px;height:54px;background:#d9d9d9;"></div>
<div style="position:absolute;left:769px;top:785px;width:1px;height:54px;background:#d9d9d9;"></div>
<div style="position:absolute;left:1033px;top:785px;width:1px;height:54px;background:#d9d9d9;"></div>
<span class="t" style="left:77.15px;top:813px;font-size:16.7px;letter-spacing:-1.038px;color:#000;">22</span>
<span class="t" style="left:119.00px;top:813px;font-size:16.7px;letter-spacing:0.141px;color:#000;">Polybutadiene Styrene</span>
<span class="t" style="left:808.00px;top:813px;font-size:16.7px;letter-spacing:-0.131px;color:#e51b24;text-decoration:underline;text-decoration-thickness:1px;text-underline-offset:2px;">10.17605/OSF.IO/7CQV4</span>
<span class="t" style="left:1038.80px;top:813px;font-size:16.7px;letter-spacing:0.116px;color:#000;">532 nm</span>
<span class="t" style="left:119.00px;top:731px;font-size:16.7px;letter-spacing:0.024px;">Poly(Styrene Butadiene</span>
<span class="t" style="left:119.00px;top:754px;font-size:16.7px;letter-spacing:-0.140px;">Styrene)</span>
<svg style="left:0;top:0" width="1300" height="839" viewBox="0 0 1300 839"><path d="M327.0 638.6 L328.5 638.3 L330.0 638.3 L331.5 637.6 L333.1 634.7 L334.7 632.2 L336.0 635.2 L337.4 637.6 L338.6 637.7 L339.9 637.8 L341.1 638.5 L342.4 638.1 L343.6 638.2 L344.8 638.5 L346.1 638.7 L347.3 638.6 L348.7 638.0 L350.0 637.6 L351.4 636.6 L352.7 636.3 L355.0 618.3 L356.3 591.2 L357.7 587.6 L358.6 575.9 L359.9 584.4 L361.3 600.2 L363.6 630.9 L364.9 633.9 L366.3 637.2 L367.5 636.6 L368.7 636.0 L369.9 635.8 L371.4 636.1 L372.9 636.6 L374.4 637.6 L375.6 637.6 L376.8 637.6 L378.0 637.6 L379.2 637.7 L380.4 637.4 L381.6 637.8 L382.8 637.8 L384.0 638.0 L385.2 637.6 L386.4 637.8 L387.6 637.4 L388.8 637.8 L390.0 637.4 L391.2 637.6 L392.4 638.2 L393.6 637.4 L394.8 638.2 L396.0 638.1 L397.2 638.0 L398.4 638.2 L399.6 638.2 L400.8 638.4 L402.0 638.1 L403.2 638.0 L404.5 638.0 L405.7 637.9 L406.9 638.2 L408.1 638.0 L409.3 638.5 L410.5 637.8 L411.7 638.0 L412.9 638.1 L414.1 637.8 L415.3 638.8 L416.5 637.7 L417.7 638.3 L418.9 638.3 L420.1 638.8 L421.3 637.9 L422.5 638.7 L423.7 638.3 L424.9 638.5 L426.1 638.3 L427.3 638.7 L428.5 638.6 L429.7 638.0 L430.9 637.9 L432.1 637.6 L433.9 626.4 L435.7 637.6 L437.0 637.5 L438.2 637.6 L439.5 636.2 L440.8 636.9 L442.0 636.3 L443.6 628.4 L445.2 620.1 L447.5 634.5 L448.8 635.3 L450.2 636.3 L451.7 632.1 L453.3 627.7 L455.6 629.5 L457.4 636.3 L458.6 636.2 L459.8 636.7 L461.0 636.3 L462.2 633.0 L463.4 629.6 L464.6 626.4 L466.4 632.7 L468.2 630.9 L470.0 637.2 L471.2 637.1 L472.4 637.1 L473.6 637.2 L475.9 632.2 L478.1 636.3 L479.6 636.9 L481.1 637.3 L482.6 638.1 L483.8 638.7 L485.1 637.7 L486.3 637.3 L487.5 638.2 L488.7 638.2 L489.9 638.4 L491.1 638.3 L492.3 638.3 L493.6 638.5 L494.8 638.7 L496.0 638.4 L497.2 638.4 L498.4 639.0 L499.6 638.7 L500.9 638.4 L502.1 639.2 L503.3 638.9 L504.5 638.6 L505.7 638.5 L506.9 638.9 L508.1 638.6 L509.4 638.6 L510.6 638.6 L511.8 638.8 L513.0 639.2 L514.2 639.0 L515.6 638.6 L516.9 638.0 L518.3 638.2 L519.6 637.6 L521.0 634.7 L522.3 631.8 L524.6 616.0 L526.8 600.2" fill="none" stroke="#111" stroke-width="1.0"/><path d="M327.0 708.5 L328.2 708.4 L329.4 708.4 L330.7 708.2 L331.9 708.3 L333.1 708.3 L334.3 708.1 L335.5 708.3 L336.7 707.7 L337.9 707.9 L339.2 707.6 L340.4 707.5 L341.6 707.6 L342.8 707.6 L344.0 706.7 L345.2 705.8 L346.4 704.9 L348.7 692.2 L350.9 704.0 L352.4 705.0 L353.9 706.2 L355.4 706.7 L357.0 705.3 L358.6 703.5 L360.1 704.4 L361.6 706.0 L363.1 707.1 L364.4 707.1 L365.6 707.2 L366.9 707.6 L368.2 707.4 L369.4 707.1 L370.7 707.7 L372.0 707.6 L373.3 707.6 L374.5 707.7 L375.8 707.8 L377.1 708.0 L378.3 708.0 L379.6 708.2 L380.9 708.7 L382.1 708.2 L383.4 708.5 L385.7 706.2 L387.9 708.5 L389.1 708.3 L390.3 708.4 L391.6 708.7 L392.8 708.3 L394.0 708.8 L395.2 708.2 L396.4 708.3 L397.7 708.5 L398.9 708.3 L400.1 708.3 L401.3 708.6 L402.5 708.6 L403.8 708.5 L405.0 708.4 L406.2 708.7 L407.4 708.5 L408.6 708.4 L409.9 708.7 L411.1 708.3 L412.3 708.5 L413.5 708.6 L414.7 708.5 L416.0 708.4 L417.2 708.5 L418.4 708.4 L419.6 708.3 L420.8 708.3 L422.0 708.7 L423.3 708.4 L424.5 708.7 L425.7 708.5 L426.9 708.4 L428.1 708.6 L429.4 708.5 L430.6 708.5 L431.8 708.2 L433.0 708.5 L434.6 704.2 L436.2 699.9 L438.4 707.6 L439.9 707.4 L441.4 707.0 L442.8 706.7 L444.3 706.2 L445.9 707.4 L447.5 708.0 L448.7 708.0 L450.0 708.2 L451.3 707.3 L452.6 707.5 L453.9 706.9 L455.2 707.4 L456.5 707.1 L457.7 705.6 L458.9 704.4 L460.1 702.6 L461.3 703.9 L462.5 704.9 L463.7 706.7 L465.0 706.2 L466.4 705.0 L467.7 704.4 L469.1 704.0 L470.5 674.2 L471.8 703.1 L473.2 704.2 L474.5 705.6 L475.9 706.7 L478.1 703.1 L479.5 705.0 L480.8 707.1 L482.2 706.5 L483.5 705.5 L484.9 705.3 L486.4 706.4 L487.9 706.8 L489.4 707.6 L490.9 706.7 L492.4 705.9 L493.9 704.9 L496.2 707.6 L497.5 706.8 L498.9 706.0 L500.2 705.0 L501.6 704.4 L502.9 706.2 L504.3 708.0 L505.5 708.2 L506.8 708.3 L508.0 708.2 L509.2 708.3 L510.5 708.4 L511.7 708.5 L513.0 708.5 L514.2 708.5 L515.6 707.5 L516.9 706.7 L518.7 696.7 L520.5 706.7 L521.9 703.0 L523.2 699.4 L525.5 672.4 L526.8 645.3" fill="none" stroke="#082660" stroke-width="1.25" stroke-dasharray="1 0.5"/><path d="M327.0 778.8 L328.3 778.0 L329.6 777.9 L330.8 779.1 L332.1 777.0 L333.4 778.4 L334.6 776.9 L335.9 779.2 L337.2 778.5 L338.4 779.3 L339.7 777.9 L341.0 778.5 L342.2 778.0 L343.5 777.6 L344.8 778.1 L346.0 777.1 L347.3 777.9 L348.8 776.8 L350.3 776.6 L351.8 775.2 L353.2 765.6 L354.5 755.8 L356.3 725.6 L358.6 724.7 L360.8 717.9 L362.2 744.6 L364.5 773.9 L366.0 776.1 L367.6 778.8 L369.0 780.2 L370.3 778.5 L371.7 777.9 L373.0 778.2 L374.4 777.9 L375.6 777.6 L376.8 777.7 L378.0 777.8 L379.2 779.5 L380.4 778.1 L381.6 778.3 L382.9 778.6 L384.1 779.6 L385.3 778.1 L386.5 777.8 L387.7 780.0 L388.9 777.3 L390.1 778.1 L391.3 778.9 L392.5 780.0 L393.7 777.8 L395.0 776.8 L396.2 779.0 L397.4 778.2 L398.6 778.3 L399.8 778.9 L401.0 778.8 L402.2 778.9 L403.4 778.4 L404.6 779.7 L405.8 779.8 L407.1 778.8 L408.3 778.5 L409.5 779.4 L410.7 779.3 L411.9 778.2 L413.1 778.7 L414.3 779.8 L415.5 779.0 L416.7 778.9 L417.9 779.3 L419.2 779.1 L420.4 779.2 L421.6 777.9 L422.8 780.5 L424.0 779.3 L425.3 778.8 L426.7 777.4 L428.1 778.1 L429.4 777.0 L430.8 776.1 L432.3 773.7 L433.8 772.0 L435.3 768.9 L436.8 771.4 L438.3 771.1 L439.8 771.6 L441.4 771.6 L442.9 769.4 L445.2 760.3 L447.5 768.9 L448.7 769.8 L449.9 767.0 L451.1 767.1 L453.3 768.0 L454.9 771.7 L456.5 776.1 L457.9 777.3 L459.4 776.3 L460.9 778.0 L462.3 778.8 L463.5 779.7 L464.7 779.6 L466.0 779.3 L467.2 777.5 L468.4 780.5 L469.6 779.3 L470.8 779.4 L472.0 779.3 L473.2 777.7 L474.4 777.9 L475.6 778.1 L476.8 780.3 L478.0 778.4 L479.2 778.8 L480.4 778.8 L481.6 779.4 L482.8 779.4 L484.1 779.2 L485.3 778.1 L486.5 776.8 L487.7 779.2 L488.9 779.3 L490.1 779.9 L491.3 779.0 L492.5 778.7 L493.7 779.4 L494.9 778.0 L496.1 778.4 L497.3 778.4 L498.5 779.3 L499.7 780.6 L500.9 779.7 L502.1 780.0 L503.4 779.4 L504.6 779.4 L505.8 778.9 L507.0 779.0 L508.2 777.5 L509.4 778.4 L510.6 778.4 L511.8 779.8 L513.0 779.7 L514.2 779.3 L515.6 779.9 L516.9 780.0 L518.3 778.5 L519.6 779.3 L521.0 778.4 L522.6 776.4 L524.1 771.6 L525.5 763.7 L526.8 755.8" fill="none" stroke="#111" stroke-width="1.0"/><path d="M346.4 838.4 L347.9 838.1 L349.4 837.8 L350.9 837.5 L352.5 831.6 L354.1 825.7 L356.3 816.7 L358.6 825.7 L360.8 838.4" fill="none" stroke="#111" stroke-width="1.0"/><path d="M427.2 838.4 L428.5 812.7 L429.9 838.4" fill="none" stroke="#111" stroke-width="1.2"/><path d="M433.5 838.4 L434.8 788.3 L435.7 838.4" fill="none" stroke="#111" stroke-width="1.3"/><path d="M453.3 838.4 L454.7 832.5 L456.0 838.4" fill="none" stroke="#111" stroke-width="1.0"/><path d="M478.6 838.4 L479.5 835.7 L480.4 838.4" fill="none" stroke="#111" stroke-width="1.0"/><path d="M522.3 838.4 L524.6 816.7 L526.8 793.3" fill="none" stroke="#111" stroke-width="1.0"/><path d="M654.3 649.8 L665.8 657.3 L665.8 670.2 L654.3 676.8 L642.8 670.2 L642.8 657.3Z M654.3 676.8L654.3 690.7 M623.8 688.9 L642.8 697.6 L654.3 690.7 L681.9 699.3 M641.0 686.1 L636.4 686.1 L636.4 706.2 L641.0 706.2 M662.3 686.1 L666.4 686.1 L666.4 706.2 L662.3 706.2" fill="none" stroke="#0c2c66" stroke-width="1.2" stroke-dasharray="1 0.6"/></svg>
<div style="position:absolute;left:1307px;top:602px;width:6px;height:21px;background:#848484;"></div>
<div style="position:absolute;left:30px;top:847px;width:1196px;height:6px;background:#848484;"></div>
<svg style="left:0;top:0" width="1420" height="97" viewBox="0 0 1420 97"><path d="M19 34 H29.5 L34 38.5 V52.3 H19 Z" fill="#fff" stroke="#000" stroke-width="1.9" /><path d="M29 34 V39 H34" fill="none" stroke="#000" stroke-width="1.5" /><path d="M47 52.3 V38.3 L49 36.3 H55 L57 38.3 H61.5 V44" fill="#ecec55" stroke="#000" stroke-width="1.6" /><path d="M47 52.3 L52.5 43.8 H68.3 L62.5 52.3 Z" fill="#80800a" stroke="#000" stroke-width="1.6" /><path d="M58.5 36 Q62.5 31.5 66.5 36.5" fill="none" stroke="#000" stroke-width="1.6" /><path d="M68.6 33.2 V38.8 H63 Z" fill="#000" stroke="none" stroke-width="0" /><rect x="86.00" y="34.00" width="15.00" height="13.70" fill="#fff" /><rect x="77.20" y="42.50" width="13.40" height="14.50" fill="#fff" /><rect x="85.00" y="33.00" width="15.00" height="13.70" fill="#a3a3a3" /><rect x="76.20" y="41.50" width="13.40" height="14.50" fill="#a3a3a3" /><path d="M79 34.5 L82.5 38 M79 34.5 H81.8 M79 34.5 V37.3" fill="none" stroke="#a3a3a3" stroke-width="1.1" /><rect x="117.00" y="35.80" width="12.50" height="10.40" fill="#fff" /><rect x="116.00" y="34.80" width="12.50" height="10.40" fill="#a3a3a3" /><rect x="127.00" y="44.00" width="12.50" height="13.00" fill="#fff" /><rect x="126.50" y="43.00" width="10.00" height="3.50" fill="#a3a3a3" /><rect x="129.50" y="43.80" width="4.60" height="3.60" fill="#a3a3a3" /><rect x="129.80" y="45.20" width="3.60" height="2.20" fill="#b9b9c8" /><path d="M131 36 L136 36 L136 41 M136 36 L131.5 40.5" fill="none" stroke="#a3a3a3" stroke-width="1.1" /><rect x="127.60" y="48.80" width="9.60" height="1.40" fill="#d8d8e4" /><rect x="129.00" y="51.50" width="1.60" height="5.00" fill="#c8c8d8" /><rect x="134.00" y="51.50" width="1.60" height="5.00" fill="#c8c8d8" /><rect x="148.00" y="35.80" width="12.50" height="10.40" fill="#fff" /><rect x="147.00" y="34.80" width="12.50" height="10.40" fill="#a3a3a3" /><rect x="158.00" y="44.00" width="12.50" height="13.00" fill="#fff" /><rect x="157.50" y="43.00" width="10.00" height="3.50" fill="#a3a3a3" /><rect x="160.50" y="43.80" width="4.60" height="3.60" fill="#a3a3a3" /><rect x="160.80" y="45.20" width="3.60" height="2.20" fill="#b9b9c8" /><path d="M162 36 L167 36 L167 41 M167 36 L162.5 40.5" fill="none" stroke="#a3a3a3" stroke-width="1.1" /><rect x="158.60" y="48.80" width="9.60" height="1.40" fill="#d8d8e4" /><rect x="160.00" y="51.50" width="1.60" height="5.00" fill="#c8c8d8" /><rect x="165.00" y="51.50" width="1.60" height="5.00" fill="#c8c8d8" /><path d="M187 34.2 H193.5 L197 37.7 V47.5 H187 Z" fill="#fff" stroke="#000" stroke-width="1.8" /><path d="M196.5 38.8 H203.5 L207.8 43 V52.4 H196.5 Z" fill="#fff" stroke="#00008b" stroke-width="1.8" /><rect x="189.00" y="37.35" width="3.00" height="1.30" fill="#000" /><rect x="189.00" y="40.35" width="6.00" height="1.30" fill="#000" /><rect x="189.00" y="43.35" width="6.00" height="1.30" fill="#000" /><rect x="199.00" y="42.55" width="3.50" height="1.30" fill="#000" /><rect x="199.00" y="45.50" width="6.50" height="1.40" fill="#000" /><rect x="199.00" y="48.50" width="6.50" height="1.40" fill="#000" /><path d="M218 34.2 H224.5 L228 37.7 V47.5 H218 Z" fill="#b8b8b8" stroke="#000" stroke-width="1.8" /><path d="M227.5 38.8 H234.5 L238.8 43 V52.4 H227.5 Z" fill="#c4c4c4" stroke="#00008b" stroke-width="1.8" /><ellipse cx="222.7" cy="41" rx="2.6" ry="4" fill="#e9e9e9" stroke="#000" stroke-width="1.3"/><ellipse cx="233.2" cy="46.5" rx="2.8" ry="4" fill="#e9e9e9" stroke="#000" stroke-width="1.4"/><path d="M249 34.2 H255.5 L259 37.7 V47.5 H249 Z" fill="#b8b8b8" stroke="#000" stroke-width="1.8" /><path d="M258.5 38.8 H265.5 L269.8 43 V52.4 H258.5 Z" fill="#c4c4c4" stroke="#00008b" stroke-width="1.8" /><path d="M251.5 36.5 V45.5 H257 M251.5 40.5 H256" fill="none" stroke="#000" stroke-width="1.5" /><rect x="261.60" y="45.00" width="5.60" height="5.60" fill="#fff" stroke="#000" stroke-width="1.5"/><rect x="261.60" y="47.15" width="5.60" height="1.30" fill="#000" /><rect x="261.50" y="41.20" width="2.40" height="1.60" fill="#000" /><rect x="288.40" y="35.60" width="20.50" height="19.00" fill="#fff" rx="2"/><rect x="287.40" y="34.60" width="20.50" height="19.00" fill="#a3a3a3" rx="2.5"/><rect x="293.00" y="33.00" width="9.50" height="3.50" fill="#a3a3a3" rx="1.2"/><rect x="293.50" y="37.60" width="8.00" height="1.20" fill="#c9c9c9" /><rect x="297.80" y="44.30" width="11.80" height="11.50" fill="#fff" /><path d="M297.8 44.3 H305.8 L309.4 47.8 V55.6 H297.8 Z" fill="#fff" stroke="#a3a3a3" stroke-width="1.0" /><rect x="299.60" y="47.45" width="4.40" height="1.10" fill="#a3a3a3" /><rect x="299.60" y="50.05" width="7.80" height="1.10" fill="#a3a3a3" /><rect x="299.60" y="52.45" width="7.80" height="1.10" fill="#a3a3a3" /><path d="M328.5 55 V47.5 L331.6 38.5 V35 H334.6 V38.5 L336 44 V55 Z" fill="#000" stroke="#000" stroke-width="0.8" /><path d="M345.5 55 V47.5 L342.4 38.5 V35 H339.4 V38.5 L338 44 V55 Z" fill="#000" stroke="#000" stroke-width="0.8" /><rect x="335.50" y="41.50" width="3.00" height="4.50" fill="#000" /><rect x="330.00" y="47.60" width="4.40" height="5.20" fill="#fff" /><rect x="339.60" y="47.60" width="4.40" height="5.20" fill="#fff" /><rect x="331.30" y="49.20" width="1.80" height="2.00" fill="#000" /><rect x="340.90" y="49.20" width="1.80" height="2.00" fill="#000" /><rect x="331.30" y="42.50" width="2.60" height="2.40" fill="#e8e8e8" /><rect x="340.20" y="42.50" width="2.60" height="2.40" fill="#e8e8e8" /><rect x="331.90" y="37.60" width="1.60" height="1.60" fill="#ddd" /><rect x="340.60" y="37.60" width="1.60" height="1.60" fill="#ddd" /><rect x="327.60" y="54.45" width="9.20" height="0.90" fill="#d8d8d8" /><rect x="337.40" y="54.45" width="9.00" height="0.90" fill="#d8d8d8" /><path d="M820.3 34.2 L830.8 39.6 L830.8 50.2 L820.3 55.6 L809.8 50.2 L809.8 39.6Z" fill="none" stroke="#9c9c9c" stroke-width="1.9" /><rect x="1322.00" y="33.00" width="23.60" height="23.60" fill="#fff" /><rect x="1322.00" y="33.00" width="23.60" height="4.50" fill="#a8a8a8" /><path d="M1323 34 H1344.6 V55.6 H1323 Z" fill="none" stroke="#000" stroke-width="1.9" /><rect x="1322.00" y="37.00" width="23.60" height="1.60" fill="#000" /><rect x="1322.00" y="42.93" width="23.60" height="1.60" fill="#000" /><rect x="1322.00" y="48.87" width="23.60" height="1.60" fill="#000" /><rect x="1325.68" y="33.00" width="1.60" height="23.60" fill="#000" /><rect x="1333.00" y="33.00" width="1.60" height="23.60" fill="#000" /><rect x="1335.40" y="40.32" width="6.14" height="1.70" fill="#1010ff" /><rect x="1335.40" y="46.25" width="6.14" height="1.70" fill="#1010ff" /><rect x="1335.40" y="52.18" width="6.14" height="1.70" fill="#1010ff" /><rect x="1353.00" y="37.80" width="19.00" height="18.80" fill="#fff" /><rect x="1353.00" y="37.80" width="19.00" height="4.50" fill="#a8a8a8" /><path d="M1354 38.8 H1371 V55.599999999999994 H1354 Z" fill="none" stroke="#000" stroke-width="1.9" /><rect x="1353.00" y="41.80" width="19.00" height="1.60" fill="#000" /><rect x="1353.00" y="46.13" width="19.00" height="1.60" fill="#000" /><rect x="1353.00" y="50.47" width="19.00" height="1.60" fill="#000" /><rect x="1355.81" y="37.80" width="1.60" height="18.80" fill="#000" /><rect x="1361.70" y="37.80" width="1.60" height="18.80" fill="#000" /><rect x="1364.10" y="44.32" width="4.94" height="1.70" fill="#1010ff" /><rect x="1364.10" y="48.65" width="4.94" height="1.70" fill="#1010ff" /><rect x="1364.10" y="52.98" width="4.94" height="1.70" fill="#1010ff" /><rect x="1362.20" y="33.00" width="14.60" height="15.00" fill="#80800a" stroke="#000" stroke-width="1.5"/><rect x="1366.30" y="33.90" width="6.60" height="4.60" fill="#c8c8c8" stroke="#555" stroke-width="0.6"/><rect x="1366.80" y="42.50" width="5.60" height="5.60" fill="#000" /><rect x="1363.60" y="48.30" width="7.00" height="1.80" fill="#1010ff" /><rect x="1363.60" y="52.80" width="7.00" height="1.80" fill="#1010ff" /><rect x="1384.20" y="33.00" width="23.60" height="23.60" fill="#fff" /><rect x="1384.20" y="33.00" width="23.60" height="4.50" fill="#a8a8a8" /><path d="M1385.2 34 H1406.8 V55.6 H1385.2 Z" fill="none" stroke="#000" stroke-width="1.9" /><rect x="1384.20" y="37.00" width="23.60" height="1.60" fill="#000" /><rect x="1384.20" y="42.93" width="23.60" height="1.60" fill="#000" /><rect x="1384.20" y="48.87" width="23.60" height="1.60" fill="#000" /><rect x="1387.88" y="33.00" width="1.60" height="23.60" fill="#000" /><rect x="1395.20" y="33.00" width="1.60" height="23.60" fill="#000" /><rect x="1397.60" y="40.32" width="6.14" height="1.70" fill="#1010ff" /><rect x="1397.60" y="46.25" width="6.14" height="1.70" fill="#1010ff" /><rect x="1397.60" y="52.18" width="6.14" height="1.70" fill="#1010ff" /><path d="M1387 35.5 L1404.5 54 M1404.5 35.5 L1387 54" fill="none" stroke="#ff1020" stroke-width="2.2" /><path d="M20.6 67.6 V84.6 L24.4 81 L27.6 88.2 L30.3 87 L27.2 80 H32.6 Z" fill="#fff" stroke="#000" stroke-width="1.7" stroke-linejoin="miter"/><rect x="47.70" y="77.85" width="19.70" height="1.70" fill="#000" /><rect x="56.65" y="68.80" width="1.70" height="20.20" fill="#000" /><rect x="84.00" y="87.15" width="23.80" height="1.70" fill="#111" /><rect x="88.20" y="81.00" width="1.80" height="7.00" fill="#111" /><rect x="95.50" y="71.40" width="1.80" height="16.60" fill="#111" /><rect x="103.20" y="79.70" width="1.80" height="8.30" fill="#111" /><rect x="92.55" y="67.00" width="1.50" height="23.60" fill="#ff1a1a" /><rect x="100.25" y="67.00" width="1.50" height="23.60" fill="#ff1a1a" /><rect x="115.10" y="87.15" width="23.80" height="1.70" fill="#111" /><rect x="119.30" y="81.00" width="1.80" height="7.00" fill="#111" /><rect x="126.60" y="71.40" width="1.80" height="16.60" fill="#111" /><rect x="134.30" y="79.70" width="1.80" height="8.30" fill="#111" /><rect x="117.50" y="69.70" width="14.00" height="14.40" fill="none" stroke="#ff2a2a" stroke-width="1.9"/><rect x="145.90" y="71.40" width="24.10" height="15.00" fill="#ffff00" /><rect x="148.80" y="72.00" width="1.40" height="2.60" fill="#000" /><rect x="153.30" y="72.00" width="1.40" height="4.60" fill="#000" /><rect x="157.80" y="72.00" width="1.40" height="2.60" fill="#000" /><rect x="162.30" y="72.00" width="1.40" height="4.60" fill="#000" /><rect x="166.80" y="72.00" width="1.40" height="2.60" fill="#000" /><text x="150.6" y="85.2" font-family="Liberation Sans, sans-serif" font-weight="bold" font-size="8" fill="#000">1</text><text x="160.4" y="85.2" font-family="Liberation Sans, sans-serif" font-weight="bold" font-size="8" fill="#000">2</text><path d="M184.5 88.6 L179 80.4 Q178 78.4 180 78 Q181.4 77.8 182.6 79.4 L185 82.4 V70.6 Q185 69 186.5 69 Q188 69 188 70.6 V68.6 Q188 67.2 189.6 67.2 Q191.2 67.2 191.2 68.8 V69.6 Q191.2 68.2 192.8 68.2 Q194.4 68.2 194.4 69.8 V72 Q194.6 70.6 196 70.8 Q197.6 71 197.6 72.6 V83 Q197.6 86 196 88.6 Z" fill="#fff" stroke="#000" stroke-width="1.6" /><path d="M188 70.6 V78.5 M191.2 69.5 V78.5 M194.4 71.5 V78.5" fill="none" stroke="#000" stroke-width="1.4" /><circle cx="227.4" cy="78.8" r="6.2" fill="#eef0f8" stroke="#fff" stroke-width="1.6"/><path d="M232.6 84 L238.6 90" fill="none" stroke="#fff" stroke-width="3.4" /><circle cx="226.4" cy="77.8" r="6.2" fill="#e6e8f2" stroke="#a3a3a3" stroke-width="1.4"/><path d="M231.2 82.6 L237.4 88.8" fill="none" stroke="#a3a3a3" stroke-width="2.8" stroke-dasharray="1.4 0.9"/><rect x="223.20" y="76.90" width="6.40" height="1.80" fill="#a3a3a3" /><path d="M248.2 89.6 H271.5" fill="none" stroke="#fff" stroke-width="1.2" /><path d="M247.2 88.6 H270.5" fill="none" stroke="#a3a3a3" stroke-width="1.3" /><rect x="254.40" y="73.40" width="8.60" height="8.00" fill="none" stroke="#a3a3a3" stroke-width="1.3"/><rect x="258.00" y="70.40" width="1.40" height="18.20" fill="#a3a3a3" /><path d="M250.5 88 V84.5 L253.5 81.5 M266.5 88 V84.5 L263.8 81.8" fill="none" stroke="#a3a3a3" stroke-width="1.2" /><path d="M263.5 72.5 L266.5 69.5" fill="none" stroke="#fff" stroke-width="1.2" /><path d="M266.6 84.6 L269.6 87.2" fill="none" stroke="#fff" stroke-width="1.4" /><path d="M279.3 89.6 L281.6 84 L283.2 68.8 L285.8 84 L287.6 89.6 H302.6" fill="none" stroke="#fff" stroke-width="1.3" /><path d="M278.3 88.6 L280.6 83 L282.2 67.8 L284.8 83 L286.6 88.6 H301.6" fill="none" stroke="#a3a3a3" stroke-width="1.4" /><rect x="288.60" y="75.40" width="9.60" height="13.20" fill="none" stroke="#a3a3a3" stroke-width="1.3"/><rect x="291.40" y="79.00" width="4.00" height="9.60" fill="none" stroke="#a3a3a3" stroke-width="1.1"/><path d="M318.2 78.9 L325.8 71.4 V76.6 H331.8 V71.4 L339.4 78.9 L331.8 86.4 V81.2 H325.8 V86.4 Z" fill="#000" stroke="none" stroke-width="0" /><rect x="349.10" y="67.00" width="1.80" height="6.00" fill="#1a1aff" /><rect x="361.10" y="67.00" width="1.80" height="9.00" fill="#1a1aff" /><path d="M348.4 89 V84 L350 75.4 L351.6 80.5 L356.2 87.6 H358.4 L360 84 L362 78.4 L364 84.6 L366 87.8 H371.6" fill="none" stroke="#ff1414" stroke-width="1.6" stroke-linejoin="round"/><rect x="384.60" y="68.00" width="1.60" height="8.00" fill="#1a1aff" /><rect x="396.80" y="67.00" width="1.60" height="7.00" fill="#1a1aff" /><rect x="384.60" y="71.20" width="1.60" height="1.60" fill="#cfe4f7" /><rect x="396.80" y="70.40" width="1.60" height="1.60" fill="#cfe4f7" /><path d="M379 78.6 H383.4 L385.4 75 L387.4 78.6 H395.4 L397.6 74.6 L399.8 78.6 H402.6" fill="none" stroke="#1a1aff" stroke-width="1.5" /><path d="M379 84.8 H385 L388 76.4 L390.8 84.6 H396.6 L399.4 74.6 L401 79 L402.6 84.8" fill="none" stroke="#111" stroke-width="1.5" stroke-dasharray="2.2 0.8"/><path d="M379 90 H381.6 L383.6 82.4 L386.4 89.6 H391 L393.6 80.6 L396.4 90 H402.6" fill="none" stroke="#ff1414" stroke-width="1.5" /><rect x="418.00" y="87.30" width="25.60" height="1.40" fill="#111" /><path d="M418 88.3 H443.6" fill="none" stroke="#0c8a84" stroke-width="1.2" stroke-dasharray="1.6 1.6"/><rect x="418.05" y="83.00" width="1.50" height="5.00" fill="#0c8a84" /><rect x="421.60" y="81.00" width="2.40" height="7.00" fill="#111" /><rect x="423.95" y="67.00" width="1.50" height="21.00" fill="#0c8a84" /><rect x="429.85" y="67.00" width="1.70" height="21.00" fill="#111" /><rect x="433.05" y="80.00" width="1.50" height="8.00" fill="#0c8a84" /><rect x="437.10" y="80.00" width="1.80" height="8.00" fill="#111" /><rect x="449.30" y="86.85" width="23.30" height="1.90" fill="#222" /><rect x="453.05" y="82.00" width="1.90" height="6.00" fill="#222" /><rect x="460.55" y="71.40" width="1.90" height="16.60" fill="#222" /><rect x="468.05" y="79.00" width="1.90" height="9.00" fill="#222" /><rect x="449.30" y="82.85" width="23.30" height="1.50" fill="#0c8a84" /><rect x="450.00" y="78.00" width="1.80" height="5.60" fill="#0c8a84" /><rect x="456.20" y="69.80" width="1.80" height="13.80" fill="#0c8a84" /><rect x="465.00" y="75.00" width="1.80" height="8.60" fill="#0c8a84" /><rect x="479.90" y="75.75" width="23.80" height="1.70" fill="#0c8a84" /><rect x="484.10" y="70.00" width="1.80" height="6.60" fill="#0c8a84" /><rect x="490.10" y="72.00" width="1.80" height="4.60" fill="#0c8a84" /><rect x="496.40" y="69.00" width="1.80" height="7.60" fill="#0c8a84" /><rect x="479.90" y="87.05" width="23.80" height="1.90" fill="#222" /><rect x="483.65" y="80.00" width="1.90" height="8.00" fill="#222" /><rect x="491.35" y="80.00" width="1.90" height="8.00" fill="#222" /><rect x="499.05" y="80.00" width="1.90" height="8.00" fill="#222" /><rect x="511.00" y="75.80" width="24.40" height="1.60" fill="#1414f0" /><rect x="513.65" y="68.00" width="1.70" height="8.60" fill="#1414f0" /><rect x="517.90" y="72.00" width="1.60" height="4.60" fill="#1414f0" /><rect x="523.90" y="67.00" width="2.00" height="9.60" fill="#1414f0" /><rect x="528.65" y="70.00" width="1.70" height="6.60" fill="#1414f0" /><rect x="531.90" y="73.00" width="1.40" height="3.60" fill="#1414f0" /><rect x="511.00" y="79.35" width="24.40" height="1.70" fill="#222" /><rect x="514.65" y="80.00" width="1.70" height="7.00" fill="#222" /><rect x="521.15" y="80.00" width="1.70" height="8.00" fill="#222" /><rect x="524.20" y="80.00" width="1.40" height="3.40" fill="#222" /><rect x="528.65" y="80.00" width="1.70" height="10.00" fill="#222" /><rect x="532.95" y="80.00" width="1.50" height="4.00" fill="#222" /><path d="M542 88.6 L545 86.4 H565.8 V88.6 Z" fill="#0a0a8a" stroke="none" stroke-width="0" /><rect x="546.10" y="72.90" width="1.80" height="15.10" fill="#1414f0" /><rect x="547.85" y="71.40" width="1.50" height="16.60" fill="#000" /><rect x="551.90" y="79.50" width="1.80" height="8.50" fill="#1414f0" /><rect x="553.65" y="78.00" width="1.50" height="10.00" fill="#000" /><rect x="555.60" y="68.50" width="1.80" height="19.50" fill="#1414f0" /><rect x="557.35" y="67.00" width="1.50" height="21.00" fill="#000" /><rect x="560.10" y="85.50" width="1.80" height="2.50" fill="#1414f0" /><rect x="561.85" y="84.00" width="1.50" height="4.00" fill="#000" /><rect x="563.90" y="73.50" width="1.80" height="14.50" fill="#1414f0" /><rect x="565.65" y="72.00" width="1.50" height="16.00" fill="#000" /><rect x="573.00" y="67.00" width="23.90" height="23.60" fill="#000" /><clipPath id="rbc"><rect x="573" y="67" width="23.9" height="23.6"/></clipPath><g clip-path="url(#rbc)"><path d="M573 72.6 L576 69.19999999999999 L578.6 69.6 L583.8 76.0 L588 70.0 L590 69.6 L594 74.6 L596.9 77.19999999999999 V90.6 H573 Z" fill="#ff00ff" stroke="none" stroke-width="0" /><path d="M573 75.8 L576 72.39999999999999 L578.6 72.8 L583.8 79.2 L588 73.2 L590 72.8 L594 77.8 L596.9 80.39999999999999 V90.6 H573 Z" fill="#1a3cff" stroke="none" stroke-width="0" /><path d="M573 79 L576 75.6 L578.6 76 L583.8 82.4 L588 76.4 L590 76 L594 81 L596.9 83.6 V90.6 H573 Z" fill="#00e0ff" stroke="none" stroke-width="0" /><path d="M573 82.4 L576 79.0 L578.6 79.4 L583.8 85.80000000000001 L588 79.80000000000001 L590 79.4 L594 84.4 L596.9 87.0 V90.6 H573 Z" fill="#00e000" stroke="none" stroke-width="0" /><path d="M573 86 L576 82.6 L578.6 83 L583.8 89.4 L588 83.4 L590 83 L594 88 L596.9 90.6 V90.6 H573 Z" fill="#ffff00" stroke="none" stroke-width="0" /><path d="M573 89.6 L576 86.19999999999999 L578.6 86.6 L583.8 93.0 L588 87.0 L590 86.6 L594 91.6 L596.9 94.19999999999999 V90.6 H573 Z" fill="#ff0000" stroke="none" stroke-width="0" /></g><rect x="604.00" y="67.00" width="24.00" height="23.60" fill="#fff" /><path d="M604 73.6 H607.6 L608.6 70.4 L609.6 73.6 H613.6 L614.6 71 L615.6 73.6 H619.6 L622.4 67.8 L625.2 73.6 H628" fill="none" stroke="#1414f0" stroke-width="1.5" /><path d="M604 80.3 H628" fill="none" stroke="#ff1414" stroke-width="1.7" /><path d="M605.4 80 L608.6 76.6 L611.8 80 Z M619 80 L622.6 76 L626.2 80 Z" fill="#ff1414" stroke="#ff1414" stroke-width="0.6" /><rect x="614.15" y="77.00" width="1.30" height="4.60" fill="#ff1414" /><path d="M604 89.8 H606.8 L608.6 83.6 L610.6 89.8 H613.4 L614.8 86.8 L616.2 89.8 H623.4 L624.2 87 L625 89.8 H628" fill="none" stroke="#1414f0" stroke-width="1.5" /><path d="M646 70 L662.4 88 M649 69.4 L664 86 M644.6 72.6 L660 89.4" fill="none" stroke="#111" stroke-width="1.5" stroke-dasharray="1.5 0.9"/><path d="M662 70 L646 88 M659.2 69.4 L644.4 86 M664 72.6 L649 89.4" fill="none" stroke="#111" stroke-width="1.5" stroke-dasharray="1.5 0.9"/><rect x="653.70" y="67.40" width="1.40" height="7.60" fill="#111" /><rect x="661.85" y="74.50" width="1.50" height="9.50" fill="#111" /><path d="M643.6 84 V88.4 H650" fill="none" stroke="#ff1414" stroke-width="1.2" stroke-dasharray="1.4 1"/><path d="M652 88.6 H664.8" fill="none" stroke="#ff1414" stroke-width="1.0" stroke-dasharray="1 1.6"/><rect x="673.60" y="87.55" width="24.20" height="1.30" fill="#111" /><path d="M673.6 88.4 H697.8" fill="none" stroke="#ff1414" stroke-width="1.3" stroke-dasharray="1.6 1.8"/><rect x="673.65" y="82.00" width="1.70" height="6.00" fill="#ff1414" /><rect x="677.85" y="81.00" width="1.70" height="7.00" fill="#111" /><rect x="679.85" y="67.00" width="1.70" height="21.00" fill="#ff1414" /><rect x="685.85" y="67.00" width="1.70" height="21.00" fill="#111" /><rect x="688.95" y="79.00" width="1.70" height="9.00" fill="#ff1414" /><rect x="693.15" y="79.00" width="1.70" height="9.00" fill="#111" /><rect x="704.80" y="87.55" width="24.10" height="1.30" fill="#111" /><path d="M704.8 88.4 H728.9" fill="none" stroke="#ff1414" stroke-width="1.3" stroke-dasharray="1.6 1.8"/><rect x="704.75" y="83.00" width="1.70" height="5.00" fill="#ff1414" /><rect x="709.45" y="83.00" width="1.70" height="5.00" fill="#111" /><rect x="710.95" y="67.00" width="1.70" height="21.00" fill="#ff1414" /><rect x="716.65" y="76.00" width="1.70" height="12.00" fill="#111" /><rect x="719.75" y="79.00" width="1.70" height="9.00" fill="#ff1414" /><rect x="724.15" y="83.00" width="1.70" height="5.00" fill="#111" /><rect x="735.90" y="87.55" width="24.10" height="1.30" fill="#111" /><path d="M735.9 88.4 H760" fill="none" stroke="#ff1414" stroke-width="1.3" stroke-dasharray="1.6 1.8"/><rect x="735.85" y="84.00" width="1.70" height="4.00" fill="#ff1414" /><rect x="739.95" y="79.00" width="1.70" height="9.00" fill="#111" /><rect x="741.75" y="76.00" width="1.70" height="12.00" fill="#ff1414" /><rect x="747.55" y="67.00" width="1.70" height="21.00" fill="#111" /><rect x="750.65" y="80.00" width="1.70" height="8.00" fill="#ff1414" /><rect x="755.35" y="75.00" width="1.70" height="13.00" fill="#111" /><path d="M768.3 87.6 H771 L772.6 84.6 L774 87.6 H776.4 L778.4 80.6 L780.4 87.6 H791.6" fill="none" stroke="#fff" stroke-width="1.2" /><path d="M767.3 86.6 H770 L771.6 83.6 L773 86.6 H775.4 L777.4 79.6 L779.4 86.6 H790.6" fill="none" stroke="#a3a3a3" stroke-width="1.3" /><path d="M785.6 80.4 V72 M781.6 74.4 L785.6 70.2 L789.6 74.4" fill="none" stroke="#a3a3a3" stroke-width="1.7" /><path d="M799.3 87 H801.6 L804.4 82 L806 70.4 L808 73 L809.4 68.6 L811 84 L813 86 L815.4 80 L816 69 L818 72.6" fill="none" stroke="#a3a3a3" stroke-width="1.5" /><rect x="819.95" y="67.60" width="1.30" height="12.80" fill="#a3a3a3" /><rect x="820.95" y="80.40" width="1.30" height="7.20" fill="#fff" /><rect x="811.95" y="67.00" width="1.30" height="7.00" fill="#a3a3a3" /><rect x="816.40" y="68.00" width="1.00" height="10.00" fill="#fff" /><rect x="836.80" y="67.00" width="1.60" height="23.00" fill="#000" /><rect x="837.00" y="87.15" width="23.40" height="1.70" fill="#000" /><rect x="839.70" y="88.00" width="1.40" height="2.60" fill="#000" /><rect x="843.60" y="88.00" width="1.40" height="2.60" fill="#000" /><rect x="847.50" y="88.00" width="1.40" height="2.60" fill="#000" /><rect x="851.40" y="88.00" width="1.40" height="2.60" fill="#000" /><rect x="855.30" y="88.00" width="1.40" height="2.60" fill="#000" /><rect x="859.20" y="88.00" width="1.40" height="2.60" fill="#000" /><path d="M839.0 87 L840.6 84 L841.8 77 L843.0 82 L844.4 86 L846.2 86.5 L847.5 82 L848.6 85.5 L849.8 84 L851.0 78 L852.2 84.5 L853.4 86.5 L854.6 80 L855.8 71 L856.8 79 L857.8 84 L859.0 86.5 L860.0 87Z" fill="#ff1414" stroke="#ff1414" stroke-width="0.9" stroke-linejoin="round"/><rect x="867.40" y="67.00" width="1.60" height="23.00" fill="#000" /><rect x="867.60" y="87.15" width="23.40" height="1.70" fill="#000" /><rect x="870.30" y="88.00" width="1.40" height="2.60" fill="#000" /><rect x="874.20" y="88.00" width="1.40" height="2.60" fill="#000" /><rect x="878.10" y="88.00" width="1.40" height="2.60" fill="#000" /><rect x="882.00" y="88.00" width="1.40" height="2.60" fill="#000" /><rect x="885.90" y="88.00" width="1.40" height="2.60" fill="#000" /><rect x="889.80" y="88.00" width="1.40" height="2.60" fill="#000" /><path d="M869.6 87 L871.2 84 L872.4 77 L873.6 82 L875.0 86 L876.8 86.5 L878.1 82 L879.2 85.5 L880.4 84 L881.6 78 L882.8 84.5 L884.0 86.5 L885.2 80 L886.4 71 L887.4 79 L888.4 84 L889.6 86.5 L890.6 87Z" fill="#ff1414" stroke="#ff1414" stroke-width="0.9" stroke-linejoin="round"/><path d="M877.5 67 V89" fill="none" stroke="#000" stroke-width="1.5" stroke-dasharray="2 1.2"/><rect x="898.50" y="67.00" width="1.60" height="23.00" fill="#000" /><rect x="898.70" y="87.15" width="23.40" height="1.70" fill="#000" /><rect x="901.40" y="88.00" width="1.40" height="2.60" fill="#000" /><rect x="905.30" y="88.00" width="1.40" height="2.60" fill="#000" /><rect x="909.20" y="88.00" width="1.40" height="2.60" fill="#000" /><rect x="913.10" y="88.00" width="1.40" height="2.60" fill="#000" /><rect x="917.00" y="88.00" width="1.40" height="2.60" fill="#000" /><rect x="920.90" y="88.00" width="1.40" height="2.60" fill="#000" /><path d="M900.7 87 L902.3 84 L903.5 77 L904.7 82 L906.1 86 L907.9 86.5 L909.2 82 L910.3 85.5 L911.5 84 L912.7 78 L913.9 84.5 L915.1 86.5 L916.3 80 L917.5 71 L918.5 79 L919.5 84 L920.7 86.5 L921.7 87Z" fill="#ff1414" stroke="#ff1414" stroke-width="0.9" stroke-linejoin="round"/><path d="M905.2 67 V89" fill="none" stroke="#000" stroke-width="1.5" stroke-dasharray="2 1.2"/><path d="M914.3 67 V89" fill="none" stroke="#10108a" stroke-width="1.4" stroke-dasharray="2 1.2"/><path d="M939.7 77 V88 H952" fill="none" stroke="#000" stroke-width="1.8" /><path d="M940.8 85.4 L942.6 84.6 L943.6 80.6 L944.8 84.6 L946.6 84.2 L948 82 L949.4 83 L951 85" fill="none" stroke="#2222ff" stroke-width="1.2" /><path d="M948.2 67 V78.7 H961.5" fill="none" stroke="#000" stroke-width="1.6" /><path d="M945.8 68 H948 M945.8 71 H948 M945.8 74 H948 M945.8 77 H948 M951 79 V80.8 M954 79 V80.8 M957 79 V80.8 M960 79 V80.8" fill="none" stroke="#000" stroke-width="1.1" /><path d="M950 76 L950.8 69.6 L952 75.6 L954 75 L956.4 71 L958.6 74 L961 76" fill="none" stroke="#ff1414" stroke-width="1.2" /><path d="M978.3 87.6 L979.6 84.6 L981 74 L982.7 68.8 L984 74 L985 84 L986.4 86.8 L988 83 L989.2 79.6 L990.5 77.4 L991.6 80.6 L993.4 86.4 H1000.3" fill="none" stroke="#ff1414" stroke-width="1.7" stroke-linejoin="round"/><path d="M981.3 84 L982.7 73 L983.9 84 Z" fill="#ff1414" stroke="#ff1414" stroke-width="0.4" /><rect x="989.40" y="70.65" width="9.90" height="2.70" fill="#000" /><rect x="992.95" y="67.00" width="2.70" height="10.00" fill="#000" /><path d="M1009.3 87.6 L1010.6 84.6 L1012 74 L1013.7 68.8 L1015 74 L1016 84 L1017.4 86.8 L1019 83 L1020.2 79.6 L1021.5 77.4 L1022.6 80.6 L1024.4 86.4 H1031.3" fill="none" stroke="#ff1414" stroke-width="1.7" stroke-linejoin="round"/><path d="M1012.3 84 L1013.7 73 L1014.9 84 Z" fill="#ff1414" stroke="#ff1414" stroke-width="0.4" /><rect x="1021.60" y="71.75" width="8.20" height="2.50" fill="#000" /><path d="M1050 86.2 L1055.6 81.2 V84.6 H1062.4 V81.2 L1068.4 86.2 L1062.4 91 V87.8 H1055.6 V91 Z" fill="#fff" stroke="none" stroke-width="0" /><path d="M1049 85.2 L1054.6 80.2 V83.6 H1061.4 V80.2 L1067.4 85.2 L1061.4 90 V86.8 H1054.6 V90 Z" fill="#a3a3a3" stroke="none" stroke-width="0" /></svg>
<span class="t" style="left:769.00px;top:34px;font-size:20px;letter-spacing:0.008px;color:#9c9c9c;font-weight:bold;-webkit-text-stroke:0.7px #9c9c9c;">Pub</span>
<span class="t" style="left:812.60px;top:36px;font-size:19.5px;color:#9c9c9c;-webkit-text-stroke:0.5px #9c9c9c;">C</span>
<span class="t" style="left:832.20px;top:34px;font-size:20px;letter-spacing:0.792px;color:#9c9c9c;font-weight:bold;-webkit-text-stroke:0.7px #9c9c9c;">hem</span>
<span class="t" style="left:886.60px;top:33px;font-size:25px;color:#a3a3a3;-webkit-text-stroke:0.9px #a3a3a3;transform:scaleX(0.78);transform-origin:0 0;">M</span>
<span class="t" style="left:897.40px;top:41px;font-size:17px;color:#a3a3a3;font-weight:bold;-webkit-text-stroke:0.5px #a3a3a3;">s</span>
<span class="t" style="left:1047.80px;top:68px;font-size:11.5px;letter-spacing:0.151px;color:#fff;">ATR</span>
<span class="t" style="left:1047.00px;top:68px;font-size:11.5px;letter-spacing:0.151px;color:#a3a3a3;">ATR</span>
</body></html>
